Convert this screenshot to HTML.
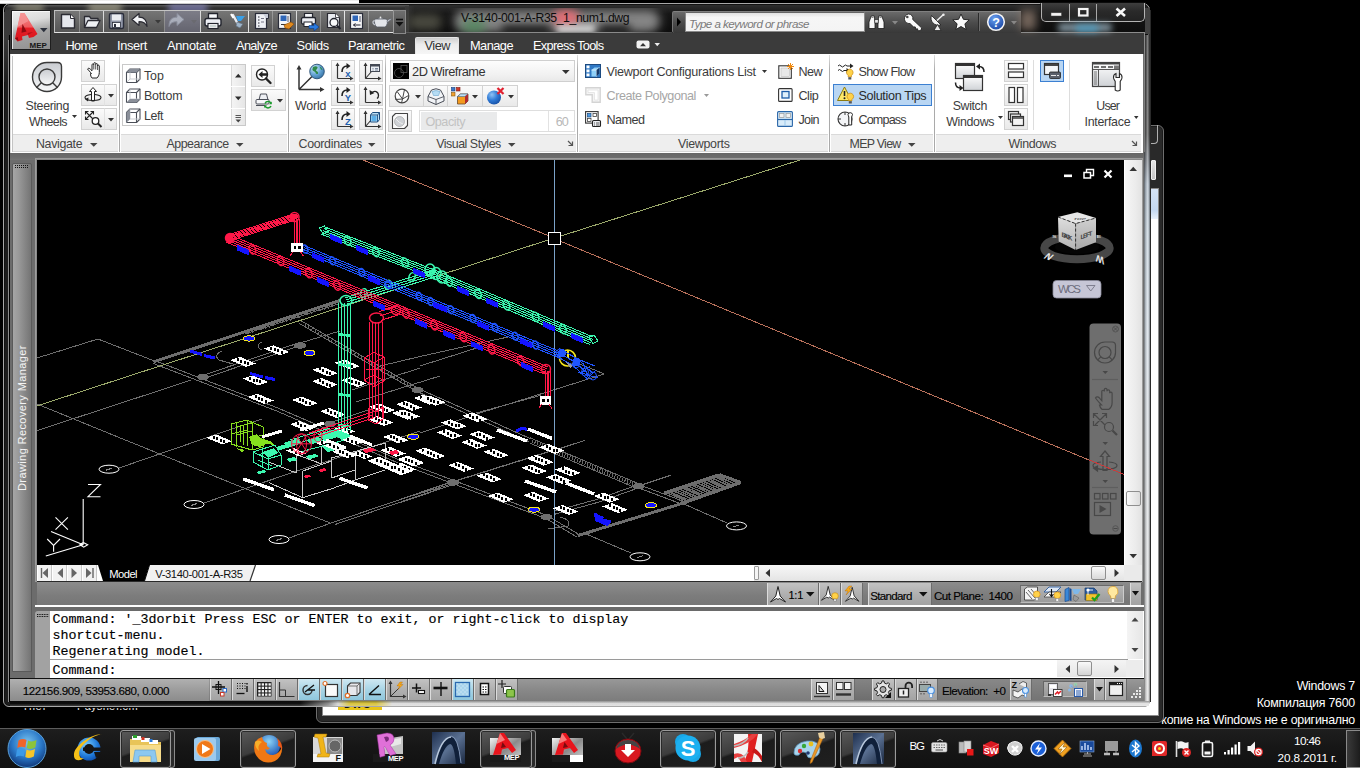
<!DOCTYPE html>
<html lang="en">
<head>
<meta charset="utf-8">
<title>AutoCAD MEP - V-3140-001-A-R35_1_num1.dwg</title>
<style>
*{box-sizing:border-box;margin:0;padding:0}
html,body{width:1360px;height:768px;overflow:hidden;background:#000}
body{position:relative;font-family:"Liberation Sans",sans-serif;font-size:12px;color:#222}
.a{position:absolute}
svg{position:absolute;overflow:visible}
.rt{position:absolute;font-size:12.6px;color:#3a3a3a;white-space:nowrap;line-height:14px;letter-spacing:-0.35px}
.pt{position:absolute;font-size:12.6px;color:#444;white-space:nowrap;line-height:14px;letter-spacing:-0.35px;text-align:center}
.tab{position:absolute;top:38px;font-size:12.6px;color:#fff;white-space:nowrap;line-height:14px;letter-spacing:-0.35px}
.btn{position:absolute;border:1px solid #d4d4d4;background:linear-gradient(#fafafa,#ececec)}
.sb{position:absolute;font-size:11.5px;color:#111;white-space:nowrap;line-height:14px;letter-spacing:-0.3px}
.cmd{position:absolute;font-family:"Liberation Mono",monospace;font-size:13.33px;color:#000;white-space:pre;line-height:16px;-webkit-text-stroke:0.15px #000}
</style>
</head>
<body>
<!-- watermark -->
<div class="a" style="right:5px;top:678px;text-align:right;color:#fff;font-size:12.4px;line-height:17px;letter-spacing:-0.25px;white-space:nowrap">Windows 7<br>Компилация 7600<br>копие на Windows не е оригинално</div>

<!-- window behind (partially visible right + bottom) -->
<div class="a" style="left:316px;top:125px;width:848px;height:598px;border-radius:6px;background:#292929;border:1px solid #6e6e6e;box-shadow:inset 0 0 0 1px #1a1a1a"></div>
<div class="a" style="left:1140px;top:125px;width:18px;height:19px;border:1px solid #b0b0b0;border-top:none;border-radius:0 0 4px 4px"></div>
<div class="a" style="left:1151px;top:160px;width:5px;height:20px;background:linear-gradient(#e6e6e6,#c4c4c4);border:1px solid #f0f0f0;border-radius:1px"></div>
<div class="a" style="left:322px;top:188px;width:837px;height:528px;background:#fff;border:1px solid #8a8a8a"></div>
<div class="a" style="left:1151px;top:189px;width:7px;height:30px;background:linear-gradient(#d4e2f4,#c4d8f0 70%,#e8f0fa)"></div>
<div class="a" style="left:338px;top:700px;width:44px;height:9px;background:#e8c416"></div>
<div class="a" style="left:340px;top:700px;font-size:11px;font-weight:bold;line-height:8px;height:6px;overflow:hidden;color:#111">DWG</div>

<!-- main window glass frame -->
<div id="win" class="a" style="left:3px;top:3px;width:1147px;height:704px;border-radius:7px 7px 6px 6px;background:#1c1c1c;border:1px solid #a8a8a8;box-shadow:inset 0 0 0 1px #111"></div>
<!-- glass: right edge shows light window behind -->
<div class="a" style="left:1144px;top:34px;width:6px;height:668px;background:linear-gradient(#454545 0,#5c5c5c 100px,#8a9098 128px,#b4c0cc 150px,#c8d4de 200px,#d6dee6 300px,#dcdfe2 450px,#e0e0e0 668px)"></div>
<div class="a" style="left:1144px;top:34px;width:6px;height:668px;background:linear-gradient(90deg,rgba(0,0,0,.5),rgba(0,0,0,.1) 30%,rgba(255,255,255,.3) 60%,rgba(0,0,0,.1) 85%,rgba(0,0,0,.55))"></div>
<div class="a" style="left:1150px;top:10px;width:1px;height:692px;background:#2a2a2a"></div>
<!-- glass: bottom edge -->
<div class="a" style="left:10px;top:701px;width:1139px;height:5px;background:linear-gradient(90deg,#0c0c0c 0,#111 290px,#8a8a8a 318px,#d4d4d4 328px,#d8c340 340px,#d8c340 366px,#ddd 382px,#dadada 800px,#e2e2e2 1139px)"></div>
<div class="a" style="left:10px;top:701px;width:1139px;height:5px;background:linear-gradient(rgba(0,0,0,.35),rgba(0,0,0,0) 50%,rgba(255,255,255,.2))"></div>
<div class="a" style="left:4px;top:12px;width:5px;height:70px;background:linear-gradient(#3a3a3a,#383838 40%,#1c1c1c)"></div>
<!-- left glass inner lines -->
<div class="a" style="left:8px;top:40px;width:1px;height:662px;background:#8c8c8c"></div>
<div class="a" style="left:9px;top:34px;width:1px;height:668px;background:#000"></div>
<!-- title bar -->
<div class="a" style="left:5px;top:5px;width:1143px;height:30px;border-radius:5px 5px 0 0;background:linear-gradient(#2e2e2e,#161616 30%,#0c0c0c)"></div>
<div class="a" style="left:5px;top:5px;width:404px;height:30px;border-radius:5px 0 0 0;background:linear-gradient(#585858 0,#2e2e2e 3px,#383838 6px,#3a3a3a)"></div>
<div class="a" style="left:14px;top:5px;width:30px;height:6px;border-radius:3px;background:#b8b49a;filter:blur(3px);opacity:.75"></div>
<div class="a" style="left:88px;top:5px;width:34px;height:6px;border-radius:3px;background:#c8c4a8;filter:blur(3px);opacity:.8"></div>
<div class="a" style="left:168px;top:5px;width:40px;height:6px;border-radius:3px;background:#9a9ae0;filter:blur(3px);opacity:.8"></div>
<div class="a" style="left:405px;top:6px;width:10px;height:28px;background:linear-gradient(90deg,#3a3a3a,rgba(20,20,20,0))"></div>
<!-- client -->
<div class="a" style="left:10px;top:34px;width:1134px;height:667px;background:#6e6e6e"></div>
<!-- desktop icon label peeking below window -->
<div class="a" style="left:22px;top:708px;width:130px;height:4px;overflow:hidden"><div style="position:absolute;left:0;top:-8px;color:#e8e8e8;font-size:11px;line-height:12px;letter-spacing:.3px;white-space:nowrap">Тнет&nbsp;&nbsp;&nbsp;&nbsp;&nbsp;&nbsp;&nbsp;&nbsp;&nbsp;Рaуsnет.сm</div></div>
<div class="a" style="left:338px;top:707px;width:44px;height:3px;background:#e8c416;overflow:hidden"><div style="position:absolute;left:6px;top:-7px;font-size:10px;font-weight:bold;line-height:10px;color:#111;letter-spacing:1px">DWG</div></div>
<!-- ===== ribbon tabs ===== -->
<div class="a" style="left:10px;top:33px;width:1134px;height:21px;background:#3b3b3b"></div>
<div class="a" style="left:415px;top:37px;width:44px;height:17px;background:linear-gradient(#cfcfcf,#ececec 40%,#f6f6f6);border:1px solid #e6e6e6;border-bottom:none;border-radius:2px 2px 0 0"></div>
<div class="a" style="left:65.5px;top:37px;font-size:12.8px;line-height:17px;color:#fff;letter-spacing:-0.66px;white-space:pre;">Home</div>
<div class="a" style="left:117.0px;top:37px;font-size:12.8px;line-height:17px;color:#fff;letter-spacing:-0.34px;white-space:pre;">Insert</div>
<div class="a" style="left:167.0px;top:37px;font-size:12.8px;line-height:17px;color:#fff;letter-spacing:-0.28px;white-space:pre;">Annotate</div>
<div class="a" style="left:236.0px;top:37px;font-size:12.8px;line-height:17px;color:#fff;letter-spacing:-0.65px;white-space:pre;">Analyze</div>
<div class="a" style="left:296.6px;top:37px;font-size:12.8px;line-height:17px;color:#fff;letter-spacing:-0.48px;white-space:pre;">Solids</div>
<div class="a" style="left:348.0px;top:37px;font-size:12.8px;line-height:17px;color:#fff;letter-spacing:-0.54px;white-space:pre;">Parametric</div>
<div class="a" style="left:470.0px;top:37px;font-size:12.8px;line-height:17px;color:#fff;letter-spacing:-0.54px;white-space:pre;">Manage</div>
<div class="a" style="left:533.0px;top:37px;font-size:12.8px;line-height:17px;color:#fff;letter-spacing:-0.69px;white-space:pre;">Express Tools</div>
<div class="a" style="left:424.5px;top:37px;font-size:12.8px;line-height:17px;color:#333;letter-spacing:-0.50px;white-space:pre;">View</div>
<svg style="left:634px;top:38px;" width="30" height="14" viewBox="0 0 30 14"><rect x="2.500" y="2.500" width="13" height="8" rx="2" fill="#f2f2f2"/><path d="M6 8.200h6l-3-3.200z" fill="#333"/><path d="M20.500 5h5.500l-2.750 3.200z" fill="#eee"/></svg>
<!-- ===== title bar ===== -->
<div class="a" style="left:440px;top:8px;width:232px;height:25px;overflow:hidden"><div class="a" style="left:14px;top:2px;width:206px;height:22px;border-radius:11px;background:#858585;filter:blur(5px)"></div><div class="a" style="left:22px;top:11px;width:24px;height:14px;border-radius:7px;background:#4f8a5c;filter:blur(5px);opacity:.8"></div><div class="a" style="left:113px;top:2px;width:26px;height:16px;border-radius:8px;background:#e06c74;filter:blur(4px)"></div><div class="a" style="left:116px;top:17px;width:40px;height:8px;border-radius:4px;background:#d8d8d8;filter:blur(3px)"></div><div class="a" style="left:62px;top:17px;width:48px;height:10px;background:#1a1a1a;filter:blur(4px)"></div><div class="a" style="left:160px;top:17px;width:30px;height:10px;background:#1a1a1a;filter:blur(4px)"></div></div>
<div class="a" style="left:408px;top:14px;width:34px;height:16px;border-radius:8px;background:#4a4a40;filter:blur(5px)"></div>
<div class="a" style="left:461.0px;top:10px;font-size:12.2px;line-height:16px;color:#0c0c0c;letter-spacing:-0.37px;white-space:pre;">V-3140-001-A-R35_1_num1.dwg</div>
<div class="a" style="left:405px;top:32px;width:267px;height:1px;background:linear-gradient(90deg,#555,#8a8a8a 30%,#8a8a8a 80%,#444)"></div>
<div class="a" style="left:11px;top:10px;width:40px;height:40px;border:1px solid #1e1e1e;background:linear-gradient(168deg,#ededed 0,#dcdcdc 30%,#a4a4a4 55%,#8f8f8f 100%);box-shadow:inset 1px 1px 0 rgba(255,255,255,.7)"></div>
<svg style="left:11px;top:10px;" width="40" height="40" viewBox="0 0 40 40"><defs><linearGradient id="ag" x1="0" y1="0" x2="0" y2="1"><stop offset="0" stop-color="#f58a8a"/><stop offset=".5" stop-color="#ee5a5e"/><stop offset=".52" stop-color="#e51f26"/><stop offset="1" stop-color="#d8141c"/></linearGradient></defs>
<path d="M4 28.500l5.500-25.500h4l13 21-4 3-4.500 1-1-3-6 1.500.5 3.500-5 1.500z" fill="url(#ag)"/>
<path d="M9.500 3l-3 14 11-6-4-8z" fill="#f79a9a" opacity=".7"/>
<path d="M11.500 14l4 7.500-5 1.200z" fill="#8c0a10"/>
<path d="M4 28.500l2.500-1.500 1 4z" fill="#8c0a10"/><path d="M17 25l-.5-2 5.500-1z" fill="#b01018"/>
<path d="M29 18h7.500l-3.700 4.300z" fill="#2a2f3b"/></svg>
<div class="a" style="left:29.5px;top:41px;font-size:8px;line-height:10px;color:#161616;letter-spacing:-0.01px;white-space:pre;font-weight:bold;">MEP</div>
<div class="a" style="left:54px;top:10px;width:340px;height:23px;background:linear-gradient(#767676,#666 50%,#565656);border-top:1px solid #c4c4c4;border-bottom:1px solid #e2e2e2;border-left:1px solid #bdbdbd"></div>
<div class="a" style="left:393px;top:10px;width:13px;height:24px;background:linear-gradient(#6e6e6e,#4a4a4a);border:1px solid #8a8a8a;border-left:1px solid #999"></div>
<svg style="left:393px;top:10px;" width="13" height="24" viewBox="0 0 13 24"><path d="M3 9.500h7" stroke="#111" stroke-width="1.600"/><path d="M2.500 12h8l-4 4.500z" fill="#111"/></svg>
<div class="a" style="left:79px;top:11px;width:1px;height:21px;background:rgba(255,255,255,.28)"></div>
<div class="a" style="left:128px;top:11px;width:1px;height:21px;background:rgba(255,255,255,.28)"></div>
<div class="a" style="left:164px;top:11px;width:1px;height:21px;background:rgba(255,255,255,.28)"></div>
<div class="a" style="left:248px;top:11px;width:1px;height:21px;background:rgba(255,255,255,.28)"></div>
<div class="a" style="left:272px;top:11px;width:1px;height:21px;background:rgba(255,255,255,.28)"></div>
<div class="a" style="left:320px;top:11px;width:1px;height:21px;background:rgba(255,255,255,.28)"></div>
<div class="a" style="left:344px;top:11px;width:1px;height:21px;background:rgba(255,255,255,.28)"></div>
<div class="a" style="left:368px;top:11px;width:1px;height:21px;background:rgba(255,255,255,.28)"></div>
<div class="a" style="left:103px;top:11px;width:1px;height:21px;background:rgba(255,255,255,.75)"></div>
<div class="a" style="left:200px;top:11px;width:1px;height:21px;background:rgba(255,255,255,.75)"></div>
<div class="a" style="left:248px;top:11px;width:1px;height:21px;background:rgba(255,255,255,.75)"></div>
<div class="a" style="left:296px;top:11px;width:1px;height:21px;background:rgba(255,255,255,.75)"></div>
<div class="a" style="left:344px;top:11px;width:1px;height:21px;background:rgba(255,255,255,.75)"></div>
<div class="a" style="left:165px;top:11px;width:35px;height:21px;background:rgba(150,150,200,.22)"></div>
<svg style="left:55px;top:10px;" width="24" height="22" viewBox="0 0 24 22"><path d="M6.5 4.5h9l4 4v9.5h-13z" fill="#e6e8ee" stroke="#2b2b33" stroke-width="1.4" stroke-linejoin="round"/><path d="M15.5 4.5v4h4" fill="#fff" stroke="#2b2b33" stroke-width="1"/></svg>
<svg style="left:79px;top:10px;" width="24" height="22" viewBox="0 0 24 22"><path d="M5.5 17.5v-11h5l1.5 2h7v2" fill="#d8dbe2" stroke="#2b2b33" stroke-width="1.3" stroke-linejoin="round"/><path d="M5.5 17.5l3.5-7h12l-3.5 7z" fill="#eef0f4" stroke="#2b2b33" stroke-width="1.3" stroke-linejoin="round"/></svg>
<svg style="left:104px;top:10px;" width="24" height="22" viewBox="0 0 24 22"><rect x="5.5" y="3.5" width="14" height="15" rx="1.5" fill="#8f95a6" stroke="#2a2d3a" stroke-width="1.4"/><rect x="8" y="4.5" width="9" height="6" fill="#e9ebf0"/><rect x="8.5" y="12.5" width="8" height="5" fill="#f4f5f8" stroke="#2a2d3a" stroke-width=".8"/><rect x="10" y="14" width="2" height="3" fill="#2a2d3a"/></svg>
<svg style="left:128px;top:10px;" width="24" height="22" viewBox="0 0 24 22"><path d="M4 9.5l7-6v3.7c5 0 8 2.300 8 9.300c-1.500-3.500-3.500-4.800-8-4.800v3.800z" fill="#f2f3f6" stroke="#2b2b33" stroke-width="1.200" stroke-linejoin="round"/></svg>
<svg style="left:152px;top:10px;" width="12" height="22" viewBox="0 0 12 22"><path d="M3 10h6l-3 3.500z" fill="#3a3a3a"/></svg>
<svg style="left:164px;top:10px;" width="24" height="22" viewBox="0 0 24 22"><path d="M20 9.500l-7-6v3.700c-5 0-8 2.300-8 9.300c1.500-3.500 3.500-4.800 8-4.800v3.800z" fill="#a9adba" stroke="#8a8e9c" stroke-width="1" stroke-linejoin="round"/></svg>
<svg style="left:188px;top:10px;" width="12" height="22" viewBox="0 0 12 22"><path d="M3 10h6l-3 3.500z" fill="#6a6a70"/></svg>
<svg style="left:201px;top:10px;" width="24" height="22" viewBox="0 0 24 22"><path d="M7.500 9v-5.500h9v5.500" fill="#f6f7fa" stroke="#23252e" stroke-width="1.300"/><rect x="4" y="8.500" width="16" height="7.500" rx="2" fill="#eceef3" stroke="#23252e" stroke-width="1.400"/><rect x="7" y="13.500" width="10" height="5" fill="#fff" stroke="#23252e" stroke-width="1.200"/><path d="M8.500 16h7" stroke="#9aa" stroke-width="1"/></svg>
<svg style="left:225px;top:10px;" width="24" height="22" viewBox="0 0 24 22"><path d="M8 5l6 11" stroke="#e8eaf0" stroke-width="2.400" stroke-linecap="round"/><path d="M6 4l2.500 4" stroke="#fff" stroke-width="2"/><path d="M11 6h9l-4 5h-3z" fill="#3aa0e8"/><path d="M12 12l6 2-3 4-4-2z" fill="#9fb4c8" stroke="#5a6a7a" stroke-width=".6"/></svg>
<svg style="left:249px;top:10px;" width="24" height="22" viewBox="0 0 24 22"><rect x="6.500" y="3.500" width="11" height="15" fill="#eef0f5" stroke="#2a2d3a" stroke-width="1.200"/><path d="M14 3.500h5.500v5h-2.500" fill="#c8ccd8" stroke="#2a2d3a" stroke-width="1"/><path d="M9 7h1.500M9 10h1.500M9 13h1.500M9 16h1.500" stroke="#2a2d3a" stroke-width="1.200"/><path d="M12 8.500h3M12 12h3" stroke="#778" stroke-width="1"/></svg>
<svg style="left:273px;top:10px;" width="24" height="22" viewBox="0 0 24 22"><rect x="5.500" y="3.500" width="12" height="15" fill="#f4f5f8" stroke="#2a2d3a" stroke-width="1.200"/><rect x="7.500" y="5.500" width="6" height="5.500" fill="#2f66b8"/><path d="M15 6v6" stroke="#889" stroke-width="1.500"/><path d="M8 14.500h5" stroke="#333" stroke-width="1"/><path d="M11 15l7-3 3 2-5 5-4-1z" fill="#e08a1e" stroke="#8a4a08" stroke-width=".6"/></svg>
<svg style="left:297px;top:10px;" width="24" height="22" viewBox="0 0 24 22"><path d="M7.500 8v-4.500h8v4.500" fill="#f6f7fa" stroke="#23252e" stroke-width="1.200"/><rect x="4.500" y="7.500" width="14" height="6.500" rx="1.500" fill="#eceef3" stroke="#23252e" stroke-width="1.300"/><rect x="7" y="12" width="8" height="4.500" fill="#fff" stroke="#23252e" stroke-width="1"/><path d="M12 15.500h5v-2.500l5 4-5 4v-2.500h-5z" fill="#2a7ae0" stroke="#0c3c88" stroke-width=".6"/></svg>
<svg style="left:321px;top:10px;" width="24" height="22" viewBox="0 0 24 22"><path d="M6.500 3.500h8l4 4v10h-12z" fill="#e9ebf0" stroke="#2b2b33" stroke-width="1.200"/><path d="M14.500 3.500v4h4" fill="#fff" stroke="#2b2b33" stroke-width=".8"/><circle cx="13" cy="12.500" r="4" fill="#f8f9fb" stroke="#23252e" stroke-width="1.300"/><path d="M16 15.500l3.500 3.500" stroke="#23252e" stroke-width="2"/></svg>
<svg style="left:345px;top:10px;" width="24" height="22" viewBox="0 0 24 22"><rect x="5.500" y="3.500" width="12" height="15" fill="#f4f5f8" stroke="#2a2d3a" stroke-width="1.200"/><rect x="7.500" y="5.500" width="5.500" height="5.500" fill="#2f66b8"/><path d="M15 6v6" stroke="#889" stroke-width="1.500"/><path d="M8.500 15h7M8.500 15l2-1.500M8.500 15l2 1.500" stroke="#223" stroke-width="1" fill="none"/></svg>
<svg style="left:369px;top:10px;" width="24" height="22" viewBox="0 0 24 22"><path d="M7 9h9c2 0 2.500 1 2.500 3s-1.500 5-3 5h-7c-1.500 0-3-2.500-3-5s.5-3 1.500-3z" fill="#e3e5ea" stroke="#555a66" stroke-width=".8"/><path d="M18 11c2-2 3.500-2.500 4.500-2l-.5 1c-1 0-2 .8-3.500 3z" fill="#d0d3da" stroke="#555a66" stroke-width=".6"/><path d="M6 11c-2.500-1-3 3 0 4" fill="none" stroke="#c8ccd4" stroke-width="1.200"/><path d="M9 9c0-1 5-1 5 0" fill="#f4f5f7" stroke="#555a66" stroke-width=".6"/><circle cx="11.500" cy="7.300" r=".9" fill="#eee"/></svg>
<div class="a" style="left:672px;top:11px;width:349px;height:22px;background:linear-gradient(#6a6a6a,#4c4c4c 50%,#383838);border-top:1px solid #808080;border-left:1px solid #777;border-radius:2px 0 0 2px"></div>
<svg style="left:672px;top:12px;" width="13" height="20" viewBox="0 0 13 20"><path d="M5 5.500l4 4.500-4 4.500z" fill="#000"/></svg>
<div class="a" style="left:685px;top:12px;width:180px;height:20px;background:linear-gradient(#e2e2e2,#f6f6f6 25%,#f4f4f4);border:1px solid #8a8a8a;border-top-color:#666"></div>
<div class="a" style="left:689.0px;top:16px;font-size:11.6px;line-height:15px;color:#7a7a7a;letter-spacing:-0.55px;white-space:pre;font-style:italic;">Type a keyword or phrase</div>
<svg style="left:867px;top:13px;" width="20" height="18" viewBox="0 0 20 18"><path d="M2 15.500v-6.500l2.300-6h3l.7 6v6.500zM11 15.500v-6.500l.7-6h3l2.300 6v6.500z" fill="#fafafa" stroke="#1a1a1a" stroke-width=".8"/><rect x="7.800" y="6.500" width="3.400" height="3.500" fill="#e8e8e8" stroke="#1a1a1a" stroke-width=".6"/><path d="M4.500 4.500h2M12.500 4.500h2" stroke="#888" stroke-width="1"/></svg>
<svg style="left:891px;top:13px;" width="8" height="18" viewBox="0 0 8 18"><path d="M1 8h6l-3 3.500z" fill="#888"/></svg>
<svg style="left:903px;top:12px;" width="22" height="20" viewBox="0 0 22 20"><path d="M5.500 2a4.300 4.300 0 0 1 4.200 5.500l9 8.500-1 2.500-2.800.3-.3-2-2 .2-.2-2-2-.2-3.400-3.300a4.300 4.300 0 1 1-1.500-9.500z" fill="#fafafa" stroke="#1a1a1a" stroke-width=".8" stroke-linejoin="round"/><circle cx="4.300" cy="5" r="1.300" fill="#444"/></svg>
<svg style="left:928px;top:12px;" width="22" height="20" viewBox="0 0 22 20"><path d="M3.500 3.500c-2 5.500 2.500 11 9.500 9.500z" fill="#f4f4f4" stroke="#1a1a1a" stroke-width=".8"/><path d="M9 8.500l6.500-6" stroke="#f4f4f4" stroke-width="1.400"/><circle cx="15.500" cy="2.800" r="1.200" fill="#eee"/><path d="M6 18.500l3.500-6 3.500 6z" fill="#ececec" stroke="#1a1a1a" stroke-width=".7"/></svg>
<svg style="left:951px;top:12px;" width="20" height="20" viewBox="0 0 20 20"><path d="M10 2l2.400 5.300 5.800.6-4.300 3.900 1.200 5.700-5.100-3-5.100 3 1.200-5.700-4.300-3.900 5.800-.6z" fill="#fafafa" stroke="#1a1a1a" stroke-width=".9" stroke-linejoin="round"/></svg>
<div class="a" style="left:978px;top:13px;width:1px;height:18px;background:#2a2a2a"></div>
<div class="a" style="left:979px;top:13px;width:1px;height:18px;background:#6c6c6c"></div>
<svg style="left:986px;top:12px;" width="20" height="20" viewBox="0 0 20 20"><defs><radialGradient id="hg" cx=".4" cy=".3" r=".8"><stop offset="0" stop-color="#6aa0f0"/><stop offset="1" stop-color="#103c9c"/></radialGradient></defs><circle cx="10" cy="10" r="8.300" fill="url(#hg)" stroke="#f4f4f4" stroke-width="1.600"/><text x="10" y="14.500" font-size="12.500" font-weight="bold" fill="#fff" text-anchor="middle" font-family="Liberation Sans,sans-serif">?</text></svg>
<svg style="left:1010px;top:13px;" width="8" height="18" viewBox="0 0 8 18"><path d="M1 8h6l-3 3.500z" fill="#888"/></svg>
<div class="a" style="left:1041px;top:3px;width:104px;height:19px;border:1px solid #b4b4b4;border-top:none;border-radius:0 0 5px 5px;background:linear-gradient(#3e3e3e,#2a2a2a 45%,#222);box-shadow:0 0 0 1px rgba(20,20,20,.6)"></div>
<div class="a" style="left:1069px;top:4px;width:1px;height:17px;background:#a8a8a8"></div>
<div class="a" style="left:1096px;top:4px;width:1px;height:17px;background:#a8a8a8"></div>
<svg style="left:1041px;top:3px;" width="104" height="19" viewBox="0 0 104 19"><rect x="10" y="9.800" width="10.500" height="3.200" fill="#f4f4f4" stroke="#444" stroke-width=".5"/><rect x="38" y="6" width="8.500" height="6.500" fill="none" stroke="#f4f4f4" stroke-width="2.200"/><path d="M75.500 5.500l8.500 7.500M84 5.500l-8.500 7.500" stroke="#f8f8f8" stroke-width="2.600"/></svg>
<div class="a" style="left:1058px;top:23px;width:54px;height:9px;background:#8ea4b0;filter:blur(3px);opacity:.85;border-radius:4px"></div>
<div class="a" style="left:1076px;top:25px;width:22px;height:7px;background:#4c9cc0;filter:blur(3px);opacity:.9"></div>
<div class="a" style="left:1020px;top:10px;width:16px;height:20px;background:#8a786c;filter:blur(4px);opacity:.8"></div>
<div class="a" style="left:1021px;top:32px;width:123px;height:1px;background:#8c8c8c"></div>
<div class="a" style="left:1144px;top:32px;width:1px;height:120px;background:linear-gradient(#8c8c8c,#777)"></div>
<div class="a" style="left:1145px;top:8px;width:5px;height:26px;background:#424242"></div>
<!-- ===== ribbon ===== -->
<div class="a" style="left:10px;top:54px;width:1133px;height:99px;background:#fff;border-left:1px solid #ddd"></div>
<div class="a" style="left:13px;top:134px;width:105px;height:18px;background:#eeeeee;border-top:1px solid #dadada;border-bottom:1px solid #d6d6d6"></div>
<div class="a" style="left:121px;top:134px;width:166px;height:18px;background:#eeeeee;border-top:1px solid #dadada;border-bottom:1px solid #d6d6d6"></div>
<div class="a" style="left:290px;top:134px;width:94px;height:18px;background:#eeeeee;border-top:1px solid #dadada;border-bottom:1px solid #d6d6d6"></div>
<div class="a" style="left:387px;top:134px;width:189px;height:18px;background:#eeeeee;border-top:1px solid #dadada;border-bottom:1px solid #d6d6d6"></div>
<div class="a" style="left:579px;top:134px;width:249px;height:18px;background:#eeeeee;border-top:1px solid #dadada;border-bottom:1px solid #d6d6d6"></div>
<div class="a" style="left:831px;top:134px;width:102px;height:18px;background:#eeeeee;border-top:1px solid #dadada;border-bottom:1px solid #d6d6d6"></div>
<div class="a" style="left:936px;top:134px;width:205px;height:18px;background:#eeeeee;border-top:1px solid #dadada;border-bottom:1px solid #d6d6d6"></div>
<div class="a" style="left:119px;top:55px;width:1px;height:97px;background:linear-gradient(#e0e0e0,#adadad 15%,#a9a9a9)"></div>
<div class="a" style="left:288px;top:55px;width:1px;height:97px;background:linear-gradient(#e0e0e0,#adadad 15%,#a9a9a9)"></div>
<div class="a" style="left:385px;top:55px;width:1px;height:97px;background:linear-gradient(#e0e0e0,#adadad 15%,#a9a9a9)"></div>
<div class="a" style="left:577px;top:55px;width:1px;height:97px;background:linear-gradient(#e0e0e0,#adadad 15%,#a9a9a9)"></div>
<div class="a" style="left:829px;top:55px;width:1px;height:97px;background:linear-gradient(#e0e0e0,#adadad 15%,#a9a9a9)"></div>
<div class="a" style="left:934px;top:55px;width:1px;height:97px;background:linear-gradient(#e0e0e0,#adadad 15%,#a9a9a9)"></div>
<div class="a" style="left:12px;top:56px;width:1px;height:96px;background:#c4c4c4"></div>
<svg style="left:31px;top:61px;" width="32" height="32" viewBox="0 0 32 32"><defs><linearGradient id="swg" x1="0" y1="0" x2="0" y2="1"><stop offset="0" stop-color="#c9ccd1"/><stop offset="1" stop-color="#f7f8f9"/></linearGradient></defs>
<path d="M16 1.500h10.500q4 0 4 4v10.500a14.500 14.500 0 1 1-14.500-14.500z" fill="url(#swg)" stroke="#3a3a3a" stroke-width="1.400"/>
<circle cx="16" cy="16" r="8" fill="url(#swg)" stroke="#3a3a3a" stroke-width="1.400"/>
<path d="M10.300 21.700l-5 5M21.700 21.700l5 5" stroke="#3a3a3a" stroke-width="1.400"/></svg>
<div class="a" style="left:25.6px;top:98px;font-size:12.4px;line-height:16px;color:#3c3c3c;letter-spacing:-0.35px;white-space:pre;">Steering</div>
<div class="a" style="left:29.0px;top:114px;font-size:12.4px;line-height:16px;color:#3c3c3c;letter-spacing:-0.56px;white-space:pre;">Wheels</div>
<svg style="left:72.3px;top:114.5px;" width="5" height="3" viewBox="0 0 5 3"><path d="M0 0h5l-2.5 3z" fill="#333"/></svg>
<div class="a" style="left:81px;top:60px;width:24px;height:22px;border:1px solid #d2d2d2;background:linear-gradient(#fbfbfb,#f0f0f0 60%,#e9e9e9);"></div>
<svg style="left:83px;top:61px;" width="20" height="20" viewBox="0 0 20 20"><path d="M8.500 12.500c-1.500-1.500-3-3.500-4-4.500.8-1.200 2-.8 3.200.500l1.300 1.300v-6c0-1.200 1.800-1.200 1.800 0v-1.300c0-1.200 1.900-1.200 1.900 0v1c0-1.200 1.900-1.200 1.900 0v1.500c0-1.100 1.700-1.100 1.700 0v6.500c0 2.500-1.300 4.500-2.300 5.500h-5c-1-1-1.500-2.500-1.500-4.500z" fill="#fff" stroke="#222" stroke-width="1" stroke-linejoin="round"/><path d="M10.800 4v4.500M12.700 3.500v5M14.600 5v4" stroke="#222" stroke-width=".8"/></svg>
<div class="a" style="left:81px;top:84px;width:24px;height:22px;border:1px solid #d2d2d2;background:linear-gradient(#fbfbfb,#f0f0f0 60%,#e9e9e9);"></div>
<div class="a" style="left:104px;top:84px;width:13px;height:22px;border:1px solid #d2d2d2;background:linear-gradient(#fbfbfb,#f0f0f0 60%,#e9e9e9);border-left-color:#e2e2e2"></div>
<svg style="left:83px;top:85px;" width="20" height="20" viewBox="0 0 20 20"><path d="M10 2.500l3.500 4h-2v9.500h-3v-9.500h-2z" fill="#fff" stroke="#222" stroke-width="1" stroke-linejoin="round"/><path d="M8 9.500c-4 .5-6 1.800-6 3 0 1.700 3.500 3 8 3s8-1.300 8-3c0-1.200-2-2.500-6-3" fill="none" stroke="#222" stroke-width="1.100"/><path d="M5.500 12.500l-3.500 1.500 3 2.500z" fill="#222"/></svg>
<svg style="left:107.5px;top:93.5px;" width="6" height="3.5" viewBox="0 0 6 3.5"><path d="M0 0h6l-3.0 3.5z" fill="#333"/></svg>
<div class="a" style="left:81px;top:108px;width:24px;height:22px;border:1px solid #d2d2d2;background:linear-gradient(#fbfbfb,#f0f0f0 60%,#e9e9e9);"></div>
<div class="a" style="left:104px;top:108px;width:13px;height:22px;border:1px solid #d2d2d2;background:linear-gradient(#fbfbfb,#f0f0f0 60%,#e9e9e9);border-left-color:#e2e2e2"></div>
<svg style="left:83px;top:109px;" width="20" height="20" viewBox="0 0 20 20"><path d="M3 3l7 7M10 3l-7 7" stroke="#222" stroke-width="1.100"/><path d="M2.500 5.500v-3h3M10.500 5.500v-3h-3M2.500 7.500v3h3" fill="none" stroke="#222" stroke-width="1.100"/><circle cx="12.500" cy="12" r="3.300" fill="#fff" stroke="#222" stroke-width="1.300"/><path d="M15 14.500l3.500 3.500" stroke="#222" stroke-width="2"/></svg>
<svg style="left:107.5px;top:117.5px;" width="6" height="3.5" viewBox="0 0 6 3.5"><path d="M0 0h6l-3.0 3.5z" fill="#333"/></svg>
<div class="a" style="left:36.0px;top:136px;font-size:12.4px;line-height:16px;color:#444;letter-spacing:-0.34px;white-space:pre;">Navigate</div>
<svg style="left:90px;top:142.8px;" width="7.5" height="3.8" viewBox="0 0 7.5 3.8"><path d="M0 0h7.5l-3.75 3.8z" fill="#444"/></svg>
<div class="a" style="left:122px;top:64px;width:124px;height:62px;border:1px solid #c9c9c9;background:#fff"></div>
<div class="a" style="left:231px;top:65px;width:14px;height:60px;background:linear-gradient(90deg,#f4f4f4,#e6e6e6);border-left:1px solid #d8d8d8"></div>
<div class="a" style="left:231px;top:86px;width:14px;height:1px;background:#fff"></div>
<div class="a" style="left:231px;top:108px;width:14px;height:1px;background:#fff"></div>
<svg style="left:231px;top:65px;" width="14" height="60" viewBox="0 0 14 60"><path d="M4 12.500h6.500l-3.250-3.800zM4 31.500h6.500l-3.250 3.800z" fill="#2c2c2c"/><path d="M4.500 50.500h5.500M4.500 52.500h5.500" stroke="#555" stroke-width="1"/><path d="M4.500 54.500h5.500l-2.750 3z" fill="#444"/></svg>
<svg style="left:125px;top:67px;" width="16" height="17" viewBox="0 0 16 17"><path d="M1.500 5.500l3.500-3.500h10v10l-3.500 3.500h-10z" fill="#fff" stroke="#4b4f58" stroke-width="1.100" stroke-linejoin="round"/><path d="M1.500 5.500h10v10M11.500 5.500l3.500-3.500" fill="none" stroke="#4b4f58" stroke-width="1.100"/><path d="M5 2v10h10M5 12l-3.500 3.500" fill="none" stroke="#c4c7cd" stroke-width=".9"/><path d="M1.500 5.500l3.500-3.500h10l-3.500 3.500z" fill="#8a8f99"/></svg>
<svg style="left:125px;top:87px;" width="16" height="17" viewBox="0 0 16 17"><path d="M1.500 5.500l3.500-3.500h10v10l-3.500 3.500h-10z" fill="#fff" stroke="#4b4f58" stroke-width="1.100" stroke-linejoin="round"/><path d="M1.500 5.500h10v10M11.500 5.500l3.500-3.500" fill="none" stroke="#4b4f58" stroke-width="1.100"/><path d="M5 2v10h10M5 12l-3.500 3.500" fill="none" stroke="#c4c7cd" stroke-width=".9"/><path d="M1.500 15.500l3.500-3.500h10l-3.500 3.500z" fill="#8a8f99"/></svg>
<svg style="left:125px;top:107px;" width="16" height="17" viewBox="0 0 16 17"><path d="M1.500 5.500l3.500-3.500h10v10l-3.500 3.500h-10z" fill="#fff" stroke="#4b4f58" stroke-width="1.100" stroke-linejoin="round"/><path d="M1.500 5.500h10v10M11.500 5.500l3.500-3.500" fill="none" stroke="#4b4f58" stroke-width="1.100"/><path d="M5 2v10h10M5 12l-3.500 3.500" fill="none" stroke="#c4c7cd" stroke-width=".9"/><path d="M1.500 5.500l3.500-3.500v10l-3.500 3.500z" fill="#8a8f99"/></svg>
<div class="a" style="left:144.0px;top:68px;font-size:12.4px;line-height:16px;color:#3c3c3c;letter-spacing:-0.10px;white-space:pre;">Top</div>
<div class="a" style="left:144.0px;top:88px;font-size:12.4px;line-height:16px;color:#3c3c3c;letter-spacing:-0.16px;white-space:pre;">Bottom</div>
<div class="a" style="left:144.0px;top:108px;font-size:12.4px;line-height:16px;color:#3c3c3c;letter-spacing:-0.42px;white-space:pre;">Left</div>
<div class="a" style="left:251px;top:65px;width:24px;height:22px;border:1px solid #d2d2d2;background:linear-gradient(#fbfbfb,#f0f0f0 60%,#e9e9e9);"></div>
<svg style="left:253px;top:66px;" width="20" height="20" viewBox="0 0 20 20"><circle cx="9" cy="8.500" r="5.500" fill="#fff" stroke="#222" stroke-width="1.400"/><path d="M13 12.500l4.500 4.500" stroke="#222" stroke-width="2.400" stroke-linecap="round"/><path d="M5.500 8.500l4-3.500v2.300h5.500v2.400h-5.500v2.300z" fill="#222"/></svg>
<div class="a" style="left:251px;top:89px;width:35px;height:22px;border:1px solid #d2d2d2;background:linear-gradient(#fbfbfb,#f0f0f0 60%,#e9e9e9);"></div>
<svg style="left:253px;top:90px;" width="20" height="20" viewBox="0 0 20 20"><path d="M6 10l1.500-6h6l1.500 6" fill="#eef0f4" stroke="#4a4e58" stroke-width="1"/><rect x="3" y="9.500" width="13" height="4.500" rx="1" fill="#f6f7f9" stroke="#4a4e58" stroke-width="1"/><path d="M3 15.500h9" stroke="#4a4e58" stroke-width="1"/><path d="M12 13.500a3.300 3.300 0 0 1 6 0M18 16a3.300 3.300 0 0 1-6 0" fill="none" stroke="#1a9a2c" stroke-width="1.500"/><path d="M18.800 11.500v2.800h-2.800zM11.200 18v-2.800h2.800z" fill="#1a9a2c"/></svg>
<svg style="left:277px;top:98.5px;" width="6" height="3.5" viewBox="0 0 6 3.5"><path d="M0 0h6l-3.0 3.5z" fill="#333"/></svg>
<div class="a" style="left:166.4px;top:136px;font-size:12.4px;line-height:16px;color:#444;letter-spacing:-0.46px;white-space:pre;">Appearance</div>
<svg style="left:236px;top:142.8px;" width="7.5" height="3.8" viewBox="0 0 7.5 3.8"><path d="M0 0h7.5l-3.75 3.8z" fill="#444"/></svg>
<svg style="left:294px;top:62px;" width="34" height="32" viewBox="0 0 34 32"><defs><radialGradient id="gl" cx=".35" cy=".3" r=".8"><stop offset="0" stop-color="#d6ecfa"/><stop offset=".5" stop-color="#6aa9d8"/><stop offset="1" stop-color="#2d6a9e"/></radialGradient></defs>
<path d="M5 27.500v-22M5 27.500h23M5 27.500l13-13" stroke="#333" stroke-width="1.500" fill="none"/><path d="M2.500 7.500l2.500-4.500 2.500 4.500zM26 25l4.500 2.500-4.500 2.500z" fill="#333"/>
<circle cx="23" cy="9.500" r="7.300" fill="url(#gl)" stroke="#2a4f73" stroke-width=".9"/><path d="M19 5c2-1 3.500-1 4.500 0 .5 1.500-1 2-1.500 3.500 1 1 2.500 1.500 2 3-.5 1.200-2 .5-2.500-1-.800-1.500-2.500-1-3-2.500-.4-1 .500-2 .500-3zM25.500 4.500c1.500.5 2.500 1.800 3 3.300-1 .2-1.700-.3-2-1.300z" fill="#2f8a4a"/></svg>
<div class="a" style="left:295.0px;top:98px;font-size:12.4px;line-height:16px;color:#3c3c3c;letter-spacing:-0.19px;white-space:pre;">World</div>
<div class="a" style="left:331px;top:60px;width:24px;height:22px;border:1px solid #d2d2d2;background:linear-gradient(#fbfbfb,#f0f0f0 60%,#e9e9e9);"></div>
<svg style="left:333px;top:61px;" width="22" height="20" viewBox="0 0 22 20"><path d="M4.500 17.500v-14M4.500 17.500h14" stroke="#333" stroke-width="1.200" fill="none"/><path d="M2.500 5l2-3.500 2 3.500zM17 15.500l3.500 2-3.500 2z" fill="#333"/><path d="M9 11c0-4 2-6 5.500-6" fill="none" stroke="#222" stroke-width="1.600"/><path d="M13.500 2l4 3-4 3z" fill="#222"/><text x="15" y="15.500" font-size="9.500" font-weight="bold" fill="#1c5fae" text-anchor="middle" font-family="Liberation Sans,sans-serif">x</text></svg>
<div class="a" style="left:331px;top:84px;width:24px;height:22px;border:1px solid #d2d2d2;background:linear-gradient(#fbfbfb,#f0f0f0 60%,#e9e9e9);"></div>
<svg style="left:333px;top:85px;" width="22" height="20" viewBox="0 0 22 20"><path d="M4.500 17.500v-14M4.500 17.500h14" stroke="#333" stroke-width="1.200" fill="none"/><path d="M2.500 5l2-3.500 2 3.500zM17 15.500l3.500 2-3.500 2z" fill="#333"/><path d="M9 11c0-4 2-6 5.500-6" fill="none" stroke="#222" stroke-width="1.600"/><path d="M13.500 2l4 3-4 3z" fill="#222"/><text x="15" y="15.500" font-size="9.500" font-weight="bold" fill="#1c5fae" text-anchor="middle" font-family="Liberation Sans,sans-serif">Y</text></svg>
<div class="a" style="left:331px;top:108px;width:24px;height:22px;border:1px solid #d2d2d2;background:linear-gradient(#fbfbfb,#f0f0f0 60%,#e9e9e9);"></div>
<svg style="left:333px;top:109px;" width="22" height="20" viewBox="0 0 22 20"><path d="M4.500 17.500v-14M4.500 17.500h14" stroke="#333" stroke-width="1.200" fill="none"/><path d="M2.500 5l2-3.500 2 3.500zM17 15.500l3.500 2-3.500 2z" fill="#333"/><path d="M9 11c0-4 2-6 5.500-6" fill="none" stroke="#222" stroke-width="1.600"/><path d="M13.500 2l4 3-4 3z" fill="#222"/><text x="15" y="15.500" font-size="9.500" font-weight="bold" fill="#1c5fae" text-anchor="middle" font-family="Liberation Sans,sans-serif">Z</text></svg>
<div class="a" style="left:359px;top:60px;width:24px;height:22px;border:1px solid #d2d2d2;background:linear-gradient(#fbfbfb,#f0f0f0 60%,#e9e9e9);"></div>
<svg style="left:361px;top:61px;" width="22" height="20" viewBox="0 0 22 20"><path d="M4.500 17.500v-14M4.500 17.500h14" stroke="#333" stroke-width="1.200" fill="none"/><path d="M2.500 5l2-3.500 2 3.500zM17 15.500l3.500 2-3.500 2z" fill="#333"/><path d="M4.500 17.500l6-7" stroke="#333" stroke-width="1.100"/><rect x="9.500" y="3.500" width="9" height="7" fill="#e9edf2" stroke="#444a55" stroke-width="1"/><rect x="9.500" y="3.500" width="9" height="2" fill="#444a55"/><path d="M11.500 7.500h1M14 7.500h3M11.500 9h1M14 9h3" stroke="#5a6a80" stroke-width=".8"/></svg>
<div class="a" style="left:359px;top:84px;width:24px;height:22px;border:1px solid #d2d2d2;background:linear-gradient(#fbfbfb,#f0f0f0 60%,#e9e9e9);"></div>
<svg style="left:361px;top:85px;" width="22" height="20" viewBox="0 0 22 20"><path d="M4.500 17.500v-14M4.500 17.500h14" stroke="#333" stroke-width="1.200" fill="none"/><path d="M2.500 5l2-3.500 2 3.500zM17 15.500l3.500 2-3.500 2z" fill="#333"/><path d="M10.500 8c3-3 7-1.500 7 2.500 0 1.500-.8 2.500-1.500 3" fill="none" stroke="#222" stroke-width="1.300"/><path d="M8.500 5l.5 5 4.500-2z" fill="#222"/></svg>
<div class="a" style="left:359px;top:108px;width:24px;height:22px;border:1px solid #d2d2d2;background:linear-gradient(#fbfbfb,#f0f0f0 60%,#e9e9e9);"></div>
<svg style="left:361px;top:109px;" width="22" height="20" viewBox="0 0 22 20"><path d="M4.500 17.500v-14M4.500 17.500h14" stroke="#333" stroke-width="1.200" fill="none"/><path d="M2.500 5l2-3.500 2 3.500zM17 15.500l3.500 2-3.500 2z" fill="#333"/><path d="M4.500 17.500l6-7" stroke="#333" stroke-width="1.100"/><path d="M9.500 6l2-2.500h7v7l-2 2.500h-7z" fill="#bfe0f5" stroke="#1d4e80" stroke-width="1"/><path d="M9.500 6h7v7M16.500 6l2-2.500" fill="none" stroke="#1d4e80" stroke-width=".9"/><rect x="10.500" y="7" width="5" height="5" fill="#5db0e8"/></svg>
<div class="a" style="left:298.5px;top:136px;font-size:12.4px;line-height:16px;color:#444;letter-spacing:-0.31px;white-space:pre;">Coordinates</div>
<svg style="left:368px;top:142.8px;" width="7.5" height="3.8" viewBox="0 0 7.5 3.8"><path d="M0 0h7.5l-3.75 3.8z" fill="#444"/></svg>
<div class="a" style="left:390px;top:60px;width:185px;height:22px;border:1px solid #cfcfcf;background:linear-gradient(#fdfdfd,#f1f1f1 70%,#e9e9e9)"></div>
<div class="a" style="left:393px;top:63px;width:16px;height:16px;background:#000"></div>
<svg style="left:393px;top:63px;" width="16" height="16" viewBox="0 0 16 16"><circle cx="6" cy="10" r="4.500" fill="none" stroke="#555" stroke-width=".8"/><rect x="8" y="2.500" width="6" height="7" fill="none" stroke="#555" stroke-width=".8"/></svg>
<div class="a" style="left:412.0px;top:63px;font-size:12.8px;line-height:17px;color:#333;letter-spacing:-0.48px;white-space:pre;">2D Wireframe</div>
<svg style="left:562.4px;top:69.5px;" width="7.6" height="4" viewBox="0 0 7.6 4"><path d="M0 0h7.6l-3.8 4z" fill="#333"/></svg>
<div class="a" style="left:389px;top:85px;width:35px;height:22px;border:1px solid #d2d2d2;background:linear-gradient(#fbfbfb,#f0f0f0 60%,#e9e9e9);"></div>
<div class="a" style="left:423px;top:85px;width:25px;height:22px;border:1px solid #d2d2d2;background:linear-gradient(#fbfbfb,#f0f0f0 60%,#e9e9e9);"></div>
<div class="a" style="left:447px;top:85px;width:36px;height:22px;border:1px solid #d2d2d2;background:linear-gradient(#fbfbfb,#f0f0f0 60%,#e9e9e9);"></div>
<div class="a" style="left:482px;top:85px;width:36px;height:22px;border:1px solid #d2d2d2;background:linear-gradient(#fbfbfb,#f0f0f0 60%,#e9e9e9);"></div>
<svg style="left:393px;top:87px;" width="18" height="18" viewBox="0 0 18 18"><circle cx="9" cy="9" r="6.800" fill="#fdfdfd" stroke="#444" stroke-width="1.200"/><path d="M9.500 12l-5-7M9.500 12l2-9.500M9.500 12l6-3.500M9.500 12l-7 .5M9.500 12l-1 4" stroke="#444" stroke-width="1" fill="none"/></svg>
<svg style="left:414.5px;top:94.5px;" width="6" height="3.5" viewBox="0 0 6 3.5"><path d="M0 0h6l-3.0 3.5z" fill="#333"/></svg>
<svg style="left:426px;top:86px;" width="20" height="20" viewBox="0 0 20 20"><path d="M2 10.500l3.500-6.500q4.500-2.500 9 0l3.500 6.500v4.500l-8 3.500-8-3.500z" fill="#f2f4f7" stroke="#4a4e58" stroke-width="1" stroke-linejoin="round"/><path d="M2 10.500l8 3 8-3M10 13.500v5" fill="none" stroke="#4a4e58" stroke-width=".9"/><path d="M6 5.500q4-2 8 0l-1.500 4h-5z" fill="#b5dcf4" stroke="#6aa6d0" stroke-width=".6"/></svg>
<svg style="left:450px;top:86px;" width="22" height="20" viewBox="0 0 22 20"><rect x="1.500" y="1.500" width="3.500" height="3.500" fill="#3c78c8" stroke="#1d3f7a" stroke-width=".6"/><rect x="6.500" y="1.500" width="3.500" height="3.500" fill="#d03a2a" stroke="#7a1d12" stroke-width=".6"/><rect x="1.500" y="6.500" width="3.500" height="3.500" fill="#f0a030" stroke="#8a5a10" stroke-width=".6"/><path d="M7.500 10.500l3-2.500h7.500v7l-3 3h-7.500z" fill="#f39a1e" stroke="#6a4a2a" stroke-width=".8"/><path d="M10.500 8l-3 2.500h7.500l3-2.500z" fill="#bfe0f5" stroke="#446a8a" stroke-width=".6"/><path d="M15 10.500l3-2.500v7l-3 3z" fill="#b02a30"/></svg>
<svg style="left:472px;top:94.5px;" width="6" height="3.5" viewBox="0 0 6 3.5"><path d="M0 0h6l-3.0 3.5z" fill="#333"/></svg>
<svg style="left:485px;top:85px;" width="24" height="22" viewBox="0 0 24 22"><defs><radialGradient id="bl" cx=".35" cy=".3" r=".8"><stop offset="0" stop-color="#8ec2f4"/><stop offset=".5" stop-color="#2f7ad6"/><stop offset="1" stop-color="#124a9e"/></radialGradient></defs><circle cx="9" cy="12.500" r="7" fill="url(#bl)"/><path d="M12.500 3l6 6M18.500 3l-6 6" stroke="#e02030" stroke-width="2.200"/></svg>
<svg style="left:507.5px;top:94.5px;" width="6" height="3.5" viewBox="0 0 6 3.5"><path d="M0 0h6l-3.0 3.5z" fill="#333"/></svg>
<div class="a" style="left:388px;top:110px;width:24px;height:22px;border:1px solid #d2d2d2;background:linear-gradient(#fbfbfb,#f0f0f0 60%,#e9e9e9);"></div>
<svg style="left:390px;top:111px;" width="20" height="20" viewBox="0 0 20 20"><path d="M2.500 5.500l3-3h12v12l-3 3h-12z" fill="#fafafa" stroke="#444" stroke-width="1.100" stroke-linejoin="round"/><circle cx="9.500" cy="10.500" r="5" fill="#cfd2d6" stroke="#999" stroke-width=".6"/><path d="M6 8q3 4 7 5" stroke="#eee" stroke-width="1" fill="none"/></svg>
<div class="a" style="left:419px;top:110px;width:156px;height:22px;border:1px solid #dedede;background:#fff"></div>
<div class="a" style="left:421px;top:112px;width:76px;height:18px;background:#e9eaeb"></div>
<div class="a" style="left:548px;top:111px;width:1px;height:20px;background:#e2e2e2"></div>
<div class="a" style="left:425.4px;top:114px;font-size:12.6px;line-height:16px;color:#c2c2c2;letter-spacing:-0.42px;white-space:pre;">Opacity</div>
<div class="a" style="left:555.7px;top:114px;font-size:12.6px;line-height:16px;color:#b8b8b8;letter-spacing:-0.86px;white-space:pre;">60</div>
<div class="a" style="left:436.2px;top:136px;font-size:12.4px;line-height:16px;color:#444;letter-spacing:-0.47px;white-space:pre;">Visual Styles</div>
<svg style="left:507.6px;top:142.8px;" width="7.5" height="3.8" viewBox="0 0 7.5 3.8"><path d="M0 0h7.5l-3.75 3.8z" fill="#444"/></svg>
<svg style="left:567px;top:140px;" width="7" height="7" viewBox="0 0 7 7"><path d="M1 1l4 4M5.500 1.500v4h-4" stroke="#555" stroke-width="1.200" fill="none"/></svg>
<svg style="left:585px;top:64px;" width="16" height="14" viewBox="0 0 16 14"><rect x=".5" y=".5" width="15" height="13" fill="#2f78c4" stroke="#1c4a80" stroke-width="1"/><rect x="1.500" y="1.500" width="3" height="2.800" fill="#fff"/><rect x="1.500" y="5.500" width="3" height="2.800" fill="#fff"/><rect x="1.500" y="9.500" width="3" height="2.800" fill="#fff"/><path d="M6.500 6l3-2.500h5v6l-3 3h-5z" fill="#8fd0f8"/><path d="M6.500 6h5v6.500M11.500 6l3-2.500" stroke="#fff" stroke-width=".7" fill="none"/><path d="M11.500 6l3-2.500v6l-3 3z" fill="#15396a"/></svg>
<div class="a" style="left:606.5px;top:64px;font-size:12.6px;line-height:16px;color:#3c3c3c;letter-spacing:-0.26px;white-space:pre;">Viewport Configurations List</div>
<svg style="left:762.4px;top:69.8px;" width="5" height="3" viewBox="0 0 5 3"><path d="M0 0h5l-2.5 3z" fill="#333"/></svg>
<svg style="left:585px;top:87px;" width="16" height="16" viewBox="0 0 16 16"><path d="M.8 .8h14.400v14.400h-8v-7.500h-6.400z" fill="#f4f4f4" stroke="#d4d4d4" stroke-width="1.400"/><path d="M3 3h10v10h-3.500v-7.500h-6.500z" fill="#fff" stroke="#e2e2e2" stroke-width=".8"/></svg>
<div class="a" style="left:606.5px;top:88px;font-size:12.6px;line-height:16px;color:#a6a6a6;letter-spacing:-0.45px;white-space:pre;">Create Polygonal</div>
<svg style="left:704.3px;top:93.5px;" width="5" height="3" viewBox="0 0 5 3"><path d="M0 0h5l-2.5 3z" fill="#999"/></svg>
<svg style="left:585px;top:111px;" width="16" height="16" viewBox="0 0 16 16"><rect x=".6" y=".6" width="12.500" height="11.500" fill="#fff" stroke="#333" stroke-width="1.100"/><rect x="2.500" y="2.500" width="3.500" height="3.500" fill="#4a98e0" stroke="#1c4a80" stroke-width=".7"/><rect x="8" y="2.500" width="3.500" height="3" fill="#fff" stroke="#444" stroke-width=".8"/><rect x="2.500" y="7.500" width="3.500" height="3" fill="#fff" stroke="#444" stroke-width=".8"/><rect x="7.500" y="9.500" width="8" height="6" rx="1" fill="#eef0f4" stroke="#222" stroke-width="1.100"/><path d="M9 12h1M11 12h3.500M9 14h1M11 14h3.500" stroke="#333" stroke-width=".8"/></svg>
<div class="a" style="left:606.5px;top:112px;font-size:12.6px;line-height:16px;color:#3c3c3c;letter-spacing:-0.52px;white-space:pre;">Named</div>
<svg style="left:778px;top:63px;" width="16" height="17" viewBox="0 0 16 17"><rect x=".8" y="2.800" width="12.500" height="12.500" fill="#fff" stroke="#333" stroke-width="1.100"/><rect x="3" y="5" width="8.500" height="8.500" fill="#e8e8e8" stroke="#bbb" stroke-width=".6"/><path d="M12.500 0v7M9 3.500h7M10 1l5 5M15 1l-5 5" stroke="#f08a10" stroke-width="1"/></svg>
<div class="a" style="left:798.4px;top:64px;font-size:12.6px;line-height:16px;color:#3c3c3c;letter-spacing:-0.54px;white-space:pre;">New</div>
<svg style="left:778px;top:88px;" width="15" height="14" viewBox="0 0 15 14"><rect x=".6" y=".6" width="13.500" height="12.800" rx="1" fill="#fff" stroke="#333" stroke-width="1.100"/><rect x="4" y="3.500" width="7" height="6.500" fill="#dff0fc" stroke="#1c5ca8" stroke-width="1.300"/><path d="M2.500 5h9M2.500 10h9" stroke="#1c5ca8" stroke-width=".0"/></svg>
<div class="a" style="left:798.4px;top:88px;font-size:12.6px;line-height:16px;color:#3c3c3c;letter-spacing:-0.45px;white-space:pre;">Clip</div>
<svg style="left:777px;top:111px;" width="16" height="16" viewBox="0 0 16 16"><rect x=".6" y=".6" width="14.800" height="14.800" rx="1" fill="#d8ecfa" stroke="#2a66a8" stroke-width="1.100"/><rect x="2.500" y="2.500" width="4.500" height="4" fill="#f2f2f2" stroke="#999" stroke-width=".7"/><rect x="9" y="2.500" width="4.500" height="4" fill="#f2f2f2" stroke="#999" stroke-width=".7"/><path d="M1 8.500h14" stroke="#2a66a8" stroke-width="1.200"/><path d="M8 9v6" stroke="#9cc8ea" stroke-width="1"/></svg>
<div class="a" style="left:798.4px;top:112px;font-size:12.6px;line-height:16px;color:#3c3c3c;letter-spacing:-0.63px;white-space:pre;">Join</div>
<div class="a" style="left:678.0px;top:136px;font-size:12.4px;line-height:16px;color:#444;letter-spacing:-0.28px;white-space:pre;">Viewports</div>
<svg style="left:837px;top:62px;" width="18" height="18" viewBox="0 0 18 18"><path d="M1 4q1.500-2 3 0t3 0 3 0h5M1 8.500q1.500-2 3 0t3 0h4" fill="none" stroke="#222" stroke-width="1"/><path d="M13 1.500l3.500 2.500-3.500 2.500zM9.500 6l3.500 2.500-3.500 2.500z" fill="#222"/><g transform="translate(9.500 7)"><path d="M0 3.500a3.300 3.300 0 1 1 5 2.800v1.500h-3.400v-1.500a3.300 3.300 0 0 1-1.600-2.800z" fill="#ffd24a" stroke="#c88a10" stroke-width=".7"/><rect x="1.800" y="8.200" width="3" height="2.300" fill="#555" /></g></svg>
<div class="a" style="left:858.4px;top:64px;font-size:12.6px;line-height:16px;color:#3c3c3c;letter-spacing:-0.60px;white-space:pre;">Show Flow</div>
<div class="a" style="left:833px;top:84px;width:99px;height:22px;background:#b9d6f3;border:1px solid #3c80d2"></div>
<svg style="left:837px;top:86px;" width="18" height="18" viewBox="0 0 18 18"><path d="M7.500 1l7 13.500h-14z" fill="#ffe868" stroke="#8a7a10" stroke-width="1" stroke-linejoin="round"/><path d="M7.500 5v5" stroke="#222" stroke-width="1.600"/><circle cx="7.500" cy="12.300" r="1" fill="#222"/><g transform="translate(10 7)"><path d="M0 3.500a3.300 3.300 0 1 1 5 2.800v1.500h-3.400v-1.500a3.300 3.300 0 0 1-1.600-2.800z" fill="#ffd24a" stroke="#c88a10" stroke-width=".7"/><rect x="1.800" y="8.200" width="3" height="2.300" fill="#555" /></g></svg>
<div class="a" style="left:858.4px;top:88px;font-size:12.6px;line-height:16px;color:#2a2a2a;letter-spacing:-0.32px;white-space:pre;">Solution Tips</div>
<svg style="left:837px;top:110px;" width="18" height="18" viewBox="0 0 18 18"><circle cx="8" cy="9" r="7" fill="#f4f5f7" stroke="#333" stroke-width="1.100"/><path d="M8 2v3M8 13v3M1 9h3" stroke="#333" stroke-width="1"/><path d="M11 4.500a2.300 2.300 0 0 1 4.500 0c0 1-.8 1.500-.8 2.500v8h-2.900v-8c0-1-.8-1.500-.8-2.500z" fill="#fff" stroke="#222" stroke-width="1"/></svg>
<div class="a" style="left:858.4px;top:112px;font-size:12.6px;line-height:16px;color:#3c3c3c;letter-spacing:-0.83px;white-space:pre;">Compass</div>
<div class="a" style="left:849.6px;top:136px;font-size:12.4px;line-height:16px;color:#444;letter-spacing:-0.72px;white-space:pre;">MEP View</div>
<svg style="left:907.5px;top:142.8px;" width="7.5" height="3.8" viewBox="0 0 7.5 3.8"><path d="M0 0h7.5l-3.75 3.8z" fill="#444"/></svg>
<svg style="left:953px;top:61px;" width="36" height="32" viewBox="0 0 36 32"><defs><linearGradient id="wg" x1="0" y1="0" x2="0" y2="1"><stop offset="0" stop-color="#fff"/><stop offset="1" stop-color="#cfd2d6"/></linearGradient></defs>
<rect x="2.500" y="2.500" width="19" height="15" fill="url(#wg)" stroke="#333" stroke-width="1.200"/><rect x="2.500" y="2.500" width="19" height="2.500" fill="#333"/>
<rect x="10.500" y="14.500" width="19" height="15" fill="url(#wg)" stroke="#333" stroke-width="1.200"/><rect x="10.500" y="14.500" width="19" height="2.500" fill="#333"/>
<path d="M26 5.500q5 0 5 5.500" fill="none" stroke="#222" stroke-width="1.500"/><path d="M27 2.500v6l-4-3z" fill="#222"/>
<path d="M7.500 27q-5 0-5-5.500" fill="none" stroke="#222" stroke-width="1.500"/><path d="M6.500 30v-6l4 3z" fill="#222"/></svg>
<div class="a" style="left:952.7px;top:98px;font-size:12.4px;line-height:16px;color:#3c3c3c;letter-spacing:-0.37px;white-space:pre;">Switch</div>
<div class="a" style="left:946.2px;top:114px;font-size:12.4px;line-height:16px;color:#3c3c3c;letter-spacing:-0.33px;white-space:pre;">Windows</div>
<svg style="left:997.6px;top:115.5px;" width="5" height="3" viewBox="0 0 5 3"><path d="M0 0h5l-2.5 3z" fill="#333"/></svg>
<div class="a" style="left:1004px;top:60px;width:24px;height:22px;border:1px solid #d2d2d2;background:linear-gradient(#fbfbfb,#f0f0f0 60%,#e9e9e9);"></div>
<div class="a" style="left:1004px;top:84px;width:24px;height:22px;border:1px solid #d2d2d2;background:linear-gradient(#fbfbfb,#f0f0f0 60%,#e9e9e9);"></div>
<div class="a" style="left:1004px;top:108px;width:24px;height:22px;border:1px solid #d2d2d2;background:linear-gradient(#fbfbfb,#f0f0f0 60%,#e9e9e9);"></div>
<svg style="left:1006px;top:61px;" width="20" height="20" viewBox="0 0 20 20"><rect x="2.500" y="2.500" width="15" height="5.500" fill="#fff" stroke="#333" stroke-width="1.200"/><rect x="2.500" y="11" width="15" height="5.500" fill="#fff" stroke="#333" stroke-width="1.200"/></svg>
<svg style="left:1006px;top:85px;" width="20" height="20" viewBox="0 0 20 20"><rect x="3" y="2.500" width="5.500" height="15" fill="#fff" stroke="#333" stroke-width="1.200"/><rect x="11.500" y="2.500" width="5.500" height="15" fill="#fff" stroke="#333" stroke-width="1.200"/></svg>
<svg style="left:1006px;top:109px;" width="20" height="20" viewBox="0 0 20 20"><rect x="2.500" y="2.500" width="10" height="8" fill="#eee" stroke="#333" stroke-width="1.200"/><rect x="4.500" y="5" width="10" height="8" fill="#eee" stroke="#333" stroke-width="1.200"/><rect x="6.500" y="7.500" width="11" height="9" fill="#f4f4f4" stroke="#333" stroke-width="1.200"/><path d="M6.500 9h11" stroke="#333" stroke-width="1.400"/></svg>
<div class="a" style="left:1033px;top:60px;width:1px;height:70px;background:#ddd"></div>
<div class="a" style="left:1069px;top:60px;width:1px;height:70px;background:#ddd"></div>
<div class="a" style="left:1040px;top:60px;width:24px;height:22px;background:#b9d6f3;border:1px solid #3c80d2"></div>
<svg style="left:1042px;top:61px;" width="20" height="20" viewBox="0 0 20 20"><rect x="2.500" y="2.500" width="14" height="11" fill="#f4f6f8" stroke="#333" stroke-width="1.200"/><path d="M2.500 4h14" stroke="#333" stroke-width="1.800"/><rect x="7.500" y="11" width="11" height="6.500" rx="1" fill="#5a5f6a" stroke="#222" stroke-width=".8"/><path d="M9 14.500h5M15 14.500h2" stroke="#e8e8e8" stroke-width="1.200"/></svg>
<svg style="left:1091px;top:60px;" width="34" height="34" viewBox="0 0 34 34"><rect x="1.500" y="2.500" width="27" height="24" fill="url(#wg)" stroke="#444" stroke-width="1.200"/><rect x="1.500" y="2.500" width="27" height="2" fill="#444"/>
<path d="M2 9.500h26M7.500 9.500v17" stroke="#555" stroke-width="1"/><path d="M3 7h5M10 7h5M17 7h5" stroke="#444" stroke-width="1.600"/><rect x="23" y="5.500" width="5" height="3.500" fill="#777"/>
<path d="M3 12h3M3 14h3M3 16h3M3 18h3M3 20h3M3 22h3M3 24h3" stroke="#666" stroke-width=".9"/>
<path d="M22.500 17.500a4 4 0 0 1 2.500-4v4h3.500v-4a4 4 0 0 1 2.500 4c0 2-1.500 3-1.800 4v8.500q-2.500 2-5 0v-8.500c-.3-1-1.700-2-1.700-4z" fill="#fff" stroke="#2a2a2a" stroke-width="1.100"/></svg>
<div class="a" style="left:1096.3px;top:98px;font-size:12.4px;line-height:16px;color:#3c3c3c;letter-spacing:-0.87px;white-space:pre;">User</div>
<div class="a" style="left:1084.5px;top:114px;font-size:12.4px;line-height:16px;color:#3c3c3c;letter-spacing:-0.27px;white-space:pre;">Interface</div>
<svg style="left:1134.2px;top:115.5px;" width="4.5" height="3" viewBox="0 0 4.5 3"><path d="M0 0h4.5l-2.25 3z" fill="#333"/></svg>
<div class="a" style="left:1008.5px;top:136px;font-size:12.4px;line-height:16px;color:#444;letter-spacing:-0.37px;white-space:pre;">Windows</div>
<svg style="left:1131px;top:140px;" width="7" height="7" viewBox="0 0 7 7"><path d="M1 1l4 4M5.500 1.500v4h-4" stroke="#555" stroke-width="1.200" fill="none"/></svg>
<!-- ===== work area frame ===== -->
<div class="a" style="left:10px;top:153px;width:1134px;height:7px;background:linear-gradient(#666,#6c6c6c 60%,#747474)"></div>
<div class="a" style="left:10px;top:160px;width:27px;height:518px;background:#6c6c6c"></div>
<div class="a" style="left:12px;top:163px;width:20px;height:509px;background:linear-gradient(90deg,#a6a6a6,#9a9a9a 30%,#747474);border:1px solid #5a5a5a;border-radius:2px 2px 0 0"></div>
<svg style="left:14px;top:165px;" width="16" height="6" viewBox="0 0 16 6"><rect x="1" y="0" width="1" height="1" fill="#111"/><rect x="1" y="2" width="1" height="1" fill="#111"/><rect x="3" y="0" width="1" height="1" fill="#111"/><rect x="3" y="2" width="1" height="1" fill="#111"/><rect x="5" y="0" width="1" height="1" fill="#111"/><rect x="5" y="2" width="1" height="1" fill="#111"/><rect x="7" y="0" width="1" height="1" fill="#111"/><rect x="7" y="2" width="1" height="1" fill="#111"/><rect x="9" y="0" width="1" height="1" fill="#111"/><rect x="9" y="2" width="1" height="1" fill="#111"/><rect x="11" y="0" width="1" height="1" fill="#111"/><rect x="11" y="2" width="1" height="1" fill="#111"/><rect x="13" y="0" width="1" height="1" fill="#111"/><rect x="13" y="2" width="1" height="1" fill="#111"/></svg>
<div class="a" style="left:15px;top:491px;width:14px;height:0;"><div style="position:absolute;left:0;top:0;transform-origin:0 0;transform:rotate(-90deg);font-size:11px;line-height:14px;color:#f4f4f4;white-space:nowrap;letter-spacing:0.4px">Drawing Recovery Manager</div></div>
<div class="a" style="left:35px;top:158px;width:1108px;height:424px;background:#8a8a8a;border:1px solid #9c9c9c"></div>
<div class="a" style="left:37px;top:160px;width:1087px;height:405px;background:#000"></div>
<div class="a" style="left:1124px;top:160px;width:18px;height:405px;background:linear-gradient(90deg,#f6f6f6,#ececec 60%,#e2e2e2);border-left:1px solid #fff"></div>
<svg style="left:1124px;top:160px;" width="18" height="405" viewBox="0 0 18 405"><path d="M5.500 11h7.500l-3.750-4.200z" fill="#333"/><path d="M5.500 394h7.500l-3.750 4.200z" fill="#333"/></svg>
<div class="a" style="left:1126px;top:491px;width:15px;height:15px;background:linear-gradient(90deg,#fafafa,#dcdcdc);border:1px solid #8f8f8f;border-radius:2px"></div>
<svg style="left:1058px;top:165px;" width="60" height="18" viewBox="0 0 60 18"><rect x="6" y="9.500" width="8" height="2.600" fill="#fff"/><rect x="26" y="7.500" width="6.500" height="5.500" fill="none" stroke="#fff" stroke-width="1.500"/><path d="M28.500 7v-2.500h7v6h-2.500" fill="none" stroke="#fff" stroke-width="1.400"/><path d="M46.500 5.500l7 7M53.500 5.500l-7 7" stroke="#fff" stroke-width="2.200"/></svg>
<div class="a" style="left:37px;top:565px;width:1087px;height:16px;background:#fff"></div>
<div class="a" style="left:37px;top:565px;width:60px;height:16px;background:#f2f2f2"></div>
<div class="a" style="left:37px;top:565px;width:15px;height:16px;border-right:1px solid #c8c8c8;border-left:1px solid #fff"></div>
<div class="a" style="left:52px;top:565px;width:15px;height:16px;border-right:1px solid #c8c8c8;border-left:1px solid #fff"></div>
<div class="a" style="left:67px;top:565px;width:15px;height:16px;border-right:1px solid #c8c8c8;border-left:1px solid #fff"></div>
<div class="a" style="left:82px;top:565px;width:15px;height:16px;border-right:1px solid #c8c8c8;border-left:1px solid #fff"></div>
<svg style="left:37px;top:565px;" width="60" height="16" viewBox="0 0 60 16"><path d="M4.500 3v10" stroke="#666" stroke-width="1.400"/><path d="M11 3v10l-5.500-5z" fill="#666"/><path d="M26 3v10l-5.500-5z" fill="#666"/><path d="M34.500 3v10l5.500-5z" fill="#666"/><path d="M49 3v10l5.500-5z" fill="#666"/><path d="M56 3v10" stroke="#666" stroke-width="1.400"/></svg>
<svg style="left:97px;top:565px;" width="165" height="16" viewBox="0 0 165 16"><path d="M1 0h51.500l-5 16h-41.500z" fill="#000"/><path d="M52.500 0l-5 16h105.500l5.500-16z" fill="#f1f1f1"/><path d="M153 16l5.500-16" stroke="#333" stroke-width="1.200"/><path d="M47.500 16l5-16" stroke="#000" stroke-width="1"/></svg>
<div class="a" style="left:109.3px;top:567px;font-size:11.2px;line-height:15px;color:#fff;letter-spacing:-0.56px;white-space:pre;">Model</div>
<div class="a" style="left:155.2px;top:567px;font-size:11.2px;line-height:15px;color:#111;letter-spacing:-0.37px;white-space:pre;">V-3140-001-A-R35</div>
<div class="a" style="left:754px;top:565px;width:370px;height:16px;background:linear-gradient(#f6f6f6,#eee 50%,#e4e4e4)"></div>
<div class="a" style="left:754px;top:566px;width:5px;height:14px;background:#f4f4f4;border:1px solid #999;border-radius:1px"></div>
<svg style="left:760px;top:565px;" width="364" height="16" viewBox="0 0 364 16"><path d="M10 4v8l-4.500-4z" fill="#333"/><path d="M354.500 4v8l4.500-4z" fill="#333"/></svg>
<div class="a" style="left:1091px;top:566px;width:15px;height:14px;background:linear-gradient(#fafafa,#d9d9d9);border:1px solid #8f8f8f;border-radius:2px"></div>
<div class="a" style="left:1124px;top:565px;width:18px;height:16px;background:#eaeaea"></div>
<div class="a" style="left:37px;top:581px;width:1105px;height:1px;background:#2a2a2a"></div>
<div class="a" style="left:37px;top:582px;width:1105px;height:23px;background:linear-gradient(#8c8c8c,#7c7c7c 60%,#767676)"></div>
<div class="a" style="left:35px;top:605px;width:1109px;height:2px;background:#fdfdfd"></div>
<div class="a" style="left:33px;top:607px;width:1111px;height:4px;background:#6a6a6a"></div>
<div class="a" style="left:767px;top:583px;width:52px;height:22px;background:linear-gradient(#c2c2c2,#b0b0b0 50%,#a3a3a3);border-left:1px solid #dcdcdc;border-right:1px solid #6c6c6c;"></div>
<svg style="left:770px;top:585px;" width="17" height="19" viewBox="0 0 17 19"><path d="M8 1.500l2.200 9.500 5.300 6-6-3.500-1.500 1-1.500-1-6 3.500 5.300-6z" fill="#fdfdfd" stroke="#222" stroke-width="1" stroke-linejoin="round"/></svg>
<div class="a" style="left:788.5px;top:588px;font-size:11px;line-height:14px;color:#000;letter-spacing:-0.26px;white-space:pre;-webkit-text-stroke:0.12px #000;">1:1</div>
<svg style="left:806px;top:592px;" width="9" height="5" viewBox="0 0 9 5"><path d="M0 0h8.500l-4.250 4.500z" fill="#111"/></svg>
<div class="a" style="left:819px;top:583px;width:22px;height:22px;background:linear-gradient(#c2c2c2,#b0b0b0 50%,#a3a3a3);border-left:1px solid #dcdcdc;border-right:1px solid #6c6c6c;"></div>
<div class="a" style="left:841px;top:583px;width:22px;height:22px;background:linear-gradient(#c2c2c2,#b0b0b0 50%,#a3a3a3);border-left:1px solid #dcdcdc;border-right:1px solid #6c6c6c;"></div>
<svg style="left:821px;top:585px;" width="20" height="19" viewBox="0 0 20 19"><g transform="scale(.9)"><path d="M8 1.500l2.200 9.500 5.300 6-6-3.500-1.500 1-1.500-1-6 3.500 5.300-6z" fill="#fdfdfd" stroke="#222" stroke-width="1" stroke-linejoin="round"/></g><circle cx="14" cy="11" r="3.300" fill="#ffd24a" stroke="#c88a10" stroke-width=".6"/><rect x="12.800" y="14" width="2.400" height="2.500" fill="#ddd" stroke="#666" stroke-width=".4"/></svg>
<svg style="left:843px;top:585px;" width="20" height="19" viewBox="0 0 20 19"><g transform="translate(2 1) scale(.9)"><path d="M8 1.500l2.200 9.500 5.300 6-6-3.500-1.500 1-1.500-1-6 3.500 5.300-6z" fill="#fdfdfd" stroke="#222" stroke-width="1" stroke-linejoin="round"/></g><path d="M6 1l-4 5h3l-2 4 6-6h-3l3-3z" fill="#f6a818" stroke="#b86a08" stroke-width=".4"/></svg>
<div class="a" style="left:868px;top:583px;width:64px;height:22px;background:linear-gradient(#c2c2c2,#b0b0b0 50%,#a3a3a3);border-left:1px solid #dcdcdc;border-right:1px solid #6c6c6c;"></div>
<div class="a" style="left:870.3px;top:588px;font-size:11.6px;line-height:15px;color:#000;letter-spacing:-0.70px;white-space:pre;-webkit-text-stroke:0.12px #000;">Standard</div>
<svg style="left:918.5px;top:592px;" width="9" height="5" viewBox="0 0 9 5"><path d="M0 0h8.500l-4.250 4.500z" fill="#111"/></svg>
<div class="a" style="left:934.0px;top:588px;font-size:11.6px;line-height:15px;color:#000;letter-spacing:-0.50px;white-space:pre;-webkit-text-stroke:0.12px #000;">Cut Plane:  1400</div>
<div class="a" style="left:1020px;top:585px;width:104px;height:18px;background:linear-gradient(#b4b4b4,#9c9c9c);border:1px solid #6a6a6a;border-right-color:#ccc;border-bottom-color:#bbb"></div>
<svg style="left:1023px;top:586px;" width="20" height="16" viewBox="0 0 20 16"><path d="M1.500 3l3-2h10v10l-3 3h-10z" fill="#f4f4f4" stroke="#333" stroke-width=".8"/><path d="M3 6l6 7M5 4l7 8M8 3l5 6" stroke="#555" stroke-width=".9"/><g transform="translate(10.500 5)"><circle cx="3.300" cy="3.300" r="3.300" fill="#ffd24a" stroke="#d8901a" stroke-width=".7"/><rect x="2" y="6.500" width="2.600" height="3" fill="#f4f4f4" stroke="#777" stroke-width=".4"/></g></svg>
<svg style="left:1043px;top:586px;" width="20" height="16" viewBox="0 0 20 16"><path d="M1 6l5-5h12l-5 5z" fill="#dfe9f6" stroke="#2a5a9c" stroke-width=".9"/><path d="M1 11l5-5h12l-5 5z" fill="#f6f6f6" stroke="#444" stroke-width=".8"/><path d="M8.500 3v7M6.500 8l2 2.500 2-2.500" stroke="#111" stroke-width="1.100" fill="none"/><g transform="translate(11 6)"><circle cx="3.300" cy="3.300" r="3.300" fill="#ffd24a" stroke="#d8901a" stroke-width=".7"/><rect x="2" y="6.500" width="2.600" height="3" fill="#f4f4f4" stroke="#777" stroke-width=".4"/></g></svg>
<svg style="left:1063px;top:586px;" width="20" height="16" viewBox="0 0 20 16"><path d="M2 3.500l4-2v13l-4 1z" fill="#3a88d8" stroke="#1a4a90" stroke-width=".7"/><path d="M6.500 2l2 1v12l-2-.5z" fill="#1a4a90"/><path d="M9 3h9l-3 5h-4z" fill="#7ab8ee" opacity=".9"/><path d="M11 9l5 3-3 3.500-3-2z" fill="#9a9a9a" stroke="#555" stroke-width=".5"/></svg>
<svg style="left:1083px;top:586px;" width="20" height="16" viewBox="0 0 20 16"><path d="M2 2h9l3 3v9h-12z" fill="#2c5c9e" stroke="#163a6c" stroke-width=".7"/><rect x="3" y="8" width="11" height="6.500" fill="#f2c230" stroke="#9a7a10" stroke-width=".6"/><circle cx="5" cy="4" r="1.600" fill="#fff"/><path d="M5 4h5M5 4v5" stroke="#fff" stroke-width=".9"/><path d="M9 11.500l2.500 2.500 5-6" stroke="#1ea01e" stroke-width="2.200" fill="none"/></svg>
<svg style="left:1103px;top:585px;" width="20" height="19" viewBox="0 0 20 19"><path d="M5 6.500a5 5 0 1 1 7.500 4.300l-.5 3h-4l-.5-3a5 5 0 0 1-2.500-4.300z" fill="#ffe9a0" stroke="#d8a030" stroke-width=".8"/><rect x="8.300" y="13.800" width="3.400" height="3.700" fill="#f4f4f4" stroke="#777" stroke-width=".5"/></svg>
<div class="a" style="left:1130px;top:583px;width:12px;height:22px;background:linear-gradient(#c2c2c2,#b0b0b0 50%,#a3a3a3);border-left:1px solid #dcdcdc;border-right:1px solid #6c6c6c;"></div>
<svg style="left:1132px;top:591px;" width="8" height="6" viewBox="0 0 8 6"><path d="M0 0h7l-3.500 4.500z" fill="#111"/></svg>
<!-- ===== command line ===== -->
<div class="a" style="left:35px;top:611px;width:16px;height:67px;background:#a2a2a2;border-radius:3px 0 0 0"></div>
<svg style="left:37px;top:614px;" width="12" height="5" viewBox="0 0 12 5"><rect x="0.0" y="0" width="1" height="1" fill="#111"/><rect x="0.0" y="2" width="1" height="1" fill="#111"/><rect x="1.7" y="0" width="1" height="1" fill="#111"/><rect x="1.7" y="2" width="1" height="1" fill="#111"/><rect x="3.4" y="0" width="1" height="1" fill="#111"/><rect x="3.4" y="2" width="1" height="1" fill="#111"/><rect x="5.1" y="0" width="1" height="1" fill="#111"/><rect x="5.1" y="2" width="1" height="1" fill="#111"/><rect x="6.8" y="0" width="1" height="1" fill="#111"/><rect x="6.8" y="2" width="1" height="1" fill="#111"/><rect x="8.5" y="0" width="1" height="1" fill="#111"/><rect x="8.5" y="2" width="1" height="1" fill="#111"/><rect x="10.2" y="0" width="1" height="1" fill="#111"/><rect x="10.2" y="2" width="1" height="1" fill="#111"/></svg>
<div class="a" style="left:50px;top:611px;width:1094px;height:67px;background:#fff"></div>
<div class="a" style="left:50px;top:659px;width:1078px;height:1px;background:#9a9a9a"></div>
<div class="a" style="left:1127px;top:611px;width:16px;height:48px;background:linear-gradient(90deg,#f4f4f4,#e6e6e6)"></div>
<svg style="left:1127px;top:611px;" width="16" height="48" viewBox="0 0 16 48"><path d="M4.500 10.500h7l-3.500-4zM4.500 37h7l-3.500 4z" fill="#444"/></svg>
<div class="a" style="left:1057px;top:660px;width:69px;height:17px;background:linear-gradient(#f4f4f4,#e6e6e6)"></div>
<svg style="left:1057px;top:660px;" width="69" height="17" viewBox="0 0 69 17"><path d="M13 5v8l-4.500-4zM57.500 5v8l4.500-4z" fill="#333"/></svg>
<div class="a" style="left:1077px;top:661px;width:15px;height:15px;background:linear-gradient(#fafafa,#d4d4d4);border:1px solid #8f8f8f;border-radius:2px"></div>
<div class="a" style="left:1126px;top:660px;width:17px;height:17px;background:#ececec"></div>
<div class="cmd" style="left:52.500px;top:612px">Command: '_3dorbit Press ESC or ENTER to exit, or right-click to display</div>
<div class="cmd" style="left:52.500px;top:628px">shortcut-menu.</div>
<div class="cmd" style="left:52.500px;top:644px">Regenerating model.</div>
<div class="cmd" style="left:52.500px;top:663px">Command:</div>
<!-- ===== application status bar ===== -->
<div class="a" style="left:10px;top:678px;width:1134px;height:1px;background:#111"></div>
<div class="a" style="left:10px;top:679px;width:1134px;height:22px;background:linear-gradient(#989898,#888 50%,#7c7c7c)"></div>
<div class="a" style="left:10px;top:679px;width:199px;height:22px;background:linear-gradient(#b0b0b0,#9c9c9c 50%,#8c8c8c)"></div>
<div class="a" style="left:22.7px;top:683px;font-size:11.6px;line-height:15px;color:#000;letter-spacing:-0.41px;white-space:pre;-webkit-text-stroke:0.12px #000;">122156.909, 53953.680, 0.000</div>
<div class="a" style="left:210px;top:679px;width:22px;height:21px;background:linear-gradient(#c2c2c2,#b0b0b0 50%,#a3a3a3);border-left:1px solid #dcdcdc;border-right:1px solid #6c6c6c;"></div>
<svg style="left:210px;top:679px;" width="22" height="21" viewBox="0 0 22 21"><path d="M2 8h13M8.500 2v13" stroke="#111" stroke-width="1.300"/><rect x="6" y="5.500" width="5" height="5" fill="none" stroke="#111" stroke-width="1"/><rect x="13" y="9.500" width="3.500" height="3.500" fill="#fff" stroke="#2a6ac8" stroke-width="1"/><rect x="10.500" y="13.500" width="3.500" height="3.500" fill="#fff" stroke="#c83a2a" stroke-width="1"/></svg>
<div class="a" style="left:232px;top:679px;width:22px;height:21px;background:linear-gradient(#c2c2c2,#b0b0b0 50%,#a3a3a3);border-left:1px solid #dcdcdc;border-right:1px solid #6c6c6c;"></div>
<svg style="left:232px;top:679px;" width="22" height="21" viewBox="0 0 22 21"><rect x="5.0" y="4.0" width="1" height="1" fill="#111"/><rect x="5.0" y="6.5" width="1" height="1" fill="#111"/><rect x="5.0" y="9.0" width="1" height="1" fill="#111"/><rect x="7.5" y="4.0" width="1" height="1" fill="#111"/><rect x="7.5" y="6.5" width="1" height="1" fill="#111"/><rect x="7.5" y="9.0" width="1" height="1" fill="#111"/><rect x="10.0" y="4.0" width="1" height="1" fill="#111"/><rect x="10.0" y="6.5" width="1" height="1" fill="#111"/><rect x="10.0" y="9.0" width="1" height="1" fill="#111"/><rect x="12.5" y="4.0" width="1" height="1" fill="#111"/><rect x="12.5" y="6.5" width="1" height="1" fill="#111"/><rect x="12.5" y="9.0" width="1" height="1" fill="#111"/><path d="M4.500 14.500h8" stroke="#111" stroke-width="1.300"/><path d="M15 4v1.500M15 7v6" stroke="#111" stroke-width="1.400"/></svg>
<div class="a" style="left:254px;top:679px;width:22px;height:21px;background:linear-gradient(#c2c2c2,#b0b0b0 50%,#a3a3a3);border-left:1px solid #dcdcdc;border-right:1px solid #6c6c6c;"></div>
<svg style="left:254px;top:679px;" width="22" height="21" viewBox="0 0 22 21"><rect x="3" y="3" width="14.500" height="14.500" fill="#222"/><rect x="4.3" y="4.3" width="2.300" height="2.300" fill="#f4f4f4"/><rect x="4.3" y="7.7" width="2.300" height="2.300" fill="#f4f4f4"/><rect x="4.3" y="11.1" width="2.300" height="2.300" fill="#f4f4f4"/><rect x="4.3" y="14.5" width="2.300" height="2.300" fill="#f4f4f4"/><rect x="7.7" y="4.3" width="2.300" height="2.300" fill="#f4f4f4"/><rect x="7.7" y="7.7" width="2.300" height="2.300" fill="#f4f4f4"/><rect x="7.7" y="11.1" width="2.300" height="2.300" fill="#f4f4f4"/><rect x="7.7" y="14.5" width="2.300" height="2.300" fill="#f4f4f4"/><rect x="11.1" y="4.3" width="2.300" height="2.300" fill="#f4f4f4"/><rect x="11.1" y="7.7" width="2.300" height="2.300" fill="#f4f4f4"/><rect x="11.1" y="11.1" width="2.300" height="2.300" fill="#f4f4f4"/><rect x="11.1" y="14.5" width="2.300" height="2.300" fill="#f4f4f4"/><rect x="14.5" y="4.3" width="2.300" height="2.300" fill="#f4f4f4"/><rect x="14.5" y="7.7" width="2.300" height="2.300" fill="#f4f4f4"/><rect x="14.5" y="11.1" width="2.300" height="2.300" fill="#f4f4f4"/><rect x="14.5" y="14.5" width="2.300" height="2.300" fill="#f4f4f4"/></svg>
<div class="a" style="left:276px;top:679px;width:22px;height:21px;background:linear-gradient(#c2c2c2,#b0b0b0 50%,#a3a3a3);border-left:1px solid #dcdcdc;border-right:1px solid #6c6c6c;"></div>
<svg style="left:276px;top:679px;" width="22" height="21" viewBox="0 0 22 21"><path d="M3.500 3v14.500h15" fill="none" stroke="#333" stroke-width="1.200"/><path d="M3.500 11h6v6.500" fill="none" stroke="#333" stroke-width="1"/></svg>
<div class="a" style="left:298px;top:679px;width:22px;height:21px;background:linear-gradient(#cfe8f2,#a9d5e6 50%,#8fc6dc);border-left:1px solid #dcdcdc;border-right:1px solid #6c6c6c;"></div>
<svg style="left:298px;top:679px;" width="22" height="21" viewBox="0 0 22 21"><path d="M14 11a4.500 4.500 0 1 1-4.500-4.500" fill="none" stroke="#333" stroke-width="1.400"/><path d="M7 13l9-7M9.500 11h7.500" stroke="#111" stroke-width="1.300"/></svg>
<div class="a" style="left:320px;top:679px;width:22px;height:21px;background:linear-gradient(#cfe8f2,#a9d5e6 50%,#8fc6dc);border-left:1px solid #dcdcdc;border-right:1px solid #6c6c6c;"></div>
<svg style="left:320px;top:679px;" width="22" height="21" viewBox="0 0 22 21"><rect x="5.500" y="5.500" width="12" height="12" fill="#fafafa" stroke="#333" stroke-width="1.200"/><circle cx="5" cy="4.500" r="2" fill="#fff" stroke="#e0702a" stroke-width="1.200"/></svg>
<div class="a" style="left:342px;top:679px;width:22px;height:21px;background:linear-gradient(#cfe8f2,#a9d5e6 50%,#8fc6dc);border-left:1px solid #dcdcdc;border-right:1px solid #6c6c6c;"></div>
<svg style="left:342px;top:679px;" width="22" height="21" viewBox="0 0 22 21"><path d="M5.500 7l3-3h9.500v9.500l-3 3h-9.500z" fill="#e8e8ec" stroke="#333" stroke-width="1.100"/><path d="M5.500 7h9.500v9.500M15 7l3-3" fill="none" stroke="#555" stroke-width=".8"/><circle cx="5.500" cy="16.500" r="2.200" fill="#fff" stroke="#e0702a" stroke-width="1.300"/></svg>
<div class="a" style="left:364px;top:679px;width:22px;height:21px;background:linear-gradient(#cfe8f2,#a9d5e6 50%,#8fc6dc);border-left:1px solid #dcdcdc;border-right:1px solid #6c6c6c;"></div>
<svg style="left:364px;top:679px;" width="22" height="21" viewBox="0 0 22 21"><path d="M5 15.500h12M5 15.500l10-9" stroke="#111" stroke-width="1.400" fill="none"/></svg>
<div class="a" style="left:386px;top:679px;width:22px;height:21px;background:linear-gradient(#c2c2c2,#b0b0b0 50%,#a3a3a3);border-left:1px solid #dcdcdc;border-right:1px solid #6c6c6c;"></div>
<svg style="left:386px;top:679px;" width="22" height="21" viewBox="0 0 22 21"><path d="M4.500 3v14.500h14" fill="none" stroke="#333" stroke-width="1.200"/><path d="M2.500 5l2-3.500 2 3.500zM17 15.500l3.500 2-3.500 2z" fill="#333"/><path d="M4.500 17.500l9-9" stroke="#333" stroke-width="1"/><path d="M14 3l-3 4h2.500l-1.500 3.500 5-5h-2.500l2-2.500z" fill="#f6a818" stroke="#b86a08" stroke-width=".4"/></svg>
<div class="a" style="left:408px;top:679px;width:22px;height:21px;background:linear-gradient(#c2c2c2,#b0b0b0 50%,#a3a3a3);border-left:1px solid #dcdcdc;border-right:1px solid #6c6c6c;"></div>
<svg style="left:408px;top:679px;" width="22" height="21" viewBox="0 0 22 21"><path d="M4 9h9M8.500 4.500v9" stroke="#111" stroke-width="1.500"/><rect x="10.500" y="11.500" width="6" height="3" fill="#fff" stroke="#111" stroke-width="1.100"/></svg>
<div class="a" style="left:430px;top:679px;width:22px;height:21px;background:linear-gradient(#c2c2c2,#b0b0b0 50%,#a3a3a3);border-left:1px solid #dcdcdc;border-right:1px solid #6c6c6c;"></div>
<svg style="left:430px;top:679px;" width="22" height="21" viewBox="0 0 22 21"><path d="M3.500 9h14" stroke="#111" stroke-width="2.600"/><path d="M11 3v14" stroke="#111" stroke-width="1.400"/></svg>
<div class="a" style="left:452px;top:679px;width:22px;height:21px;background:linear-gradient(#cfe8f2,#a9d5e6 50%,#8fc6dc);border-left:1px solid #dcdcdc;border-right:1px solid #6c6c6c;"></div>
<svg style="left:452px;top:679px;" width="22" height="21" viewBox="0 0 22 21"><rect x="3.500" y="3.500" width="14" height="14" fill="#a8d4ec" stroke="#2a6ab0" stroke-width="1.300"/><rect x="4.5" y="4.5" width="1" height="1" fill="#e8f4fc"/><rect x="4.5" y="8.5" width="1" height="1" fill="#e8f4fc"/><rect x="4.5" y="12.5" width="1" height="1" fill="#e8f4fc"/><rect x="6.5" y="6.5" width="1" height="1" fill="#e8f4fc"/><rect x="6.5" y="10.5" width="1" height="1" fill="#e8f4fc"/><rect x="6.5" y="14.5" width="1" height="1" fill="#e8f4fc"/><rect x="8.5" y="4.5" width="1" height="1" fill="#e8f4fc"/><rect x="8.5" y="8.5" width="1" height="1" fill="#e8f4fc"/><rect x="8.5" y="12.5" width="1" height="1" fill="#e8f4fc"/><rect x="10.5" y="6.5" width="1" height="1" fill="#e8f4fc"/><rect x="10.5" y="10.5" width="1" height="1" fill="#e8f4fc"/><rect x="10.5" y="14.5" width="1" height="1" fill="#e8f4fc"/><rect x="12.5" y="4.5" width="1" height="1" fill="#e8f4fc"/><rect x="12.5" y="8.5" width="1" height="1" fill="#e8f4fc"/><rect x="12.5" y="12.5" width="1" height="1" fill="#e8f4fc"/><rect x="14.5" y="6.5" width="1" height="1" fill="#e8f4fc"/><rect x="14.5" y="10.5" width="1" height="1" fill="#e8f4fc"/><rect x="14.5" y="14.5" width="1" height="1" fill="#e8f4fc"/></svg>
<div class="a" style="left:474px;top:679px;width:22px;height:21px;background:linear-gradient(#c2c2c2,#b0b0b0 50%,#a3a3a3);border-left:1px solid #dcdcdc;border-right:1px solid #6c6c6c;"></div>
<svg style="left:474px;top:679px;" width="22" height="21" viewBox="0 0 22 21"><rect x="6.500" y="4.500" width="8" height="11" fill="#fff" stroke="#111" stroke-width="1.500"/><path d="M8.500 8h1.500M11 8h1.500M8.500 10.500h1.500M11 10.500h1.500M8.500 13h1.500M11 13h1.500" stroke="#111" stroke-width="1.200"/></svg>
<div class="a" style="left:496px;top:679px;width:22px;height:21px;background:linear-gradient(#c2c2c2,#b0b0b0 50%,#a3a3a3);border-left:1px solid #dcdcdc;border-right:1px solid #6c6c6c;"></div>
<svg style="left:496px;top:679px;" width="22" height="21" viewBox="0 0 22 21"><path d="M2 5h8M6 1v8" stroke="#222" stroke-width="1.200"/><rect x="7.500" y="7.500" width="8" height="7" rx="1" fill="#fff" stroke="#333" stroke-width="1"/><rect x="10.500" y="10.500" width="8" height="7.500" rx="1" fill="#8cc44a" stroke="#3a7a1a" stroke-width="1.200"/></svg>
<div class="a" style="left:811px;top:679px;width:22px;height:21px;background:linear-gradient(#c2c2c2,#b0b0b0 50%,#a3a3a3);border-left:1px solid #dcdcdc;border-right:1px solid #6c6c6c;"></div>
<div class="a" style="left:833px;top:679px;width:22px;height:21px;background:linear-gradient(#c2c2c2,#b0b0b0 50%,#a3a3a3);border-left:1px solid #dcdcdc;border-right:1px solid #6c6c6c;"></div>
<svg style="left:811px;top:679px;" width="22" height="21" viewBox="0 0 22 21"><rect x="5.500" y="3.500" width="11" height="11" fill="#f4f4f4" stroke="#333" stroke-width="1"/><path d="M8 12.500v-6l5 6z" fill="#ddd" stroke="#111" stroke-width="1"/><path d="M3 17.500h16" stroke="#333" stroke-width="1.400"/></svg>
<svg style="left:833px;top:679px;" width="22" height="21" viewBox="0 0 22 21"><rect x="3.500" y="3.500" width="6.500" height="7" fill="#f4f4f4" stroke="#333" stroke-width="1"/><rect x="11.500" y="3.500" width="6.500" height="7" fill="#f4f4f4" stroke="#333" stroke-width="1"/><path d="M3 15.500h15" stroke="#333" stroke-width="2.400"/></svg>
<div class="a" style="left:855px;top:679px;width:17px;height:21px;background:linear-gradient(#848484,#6e6e6e)"></div>
<div class="a" style="left:872px;top:679px;width:23px;height:21px;background:linear-gradient(#c2c2c2,#b0b0b0 50%,#a3a3a3);border-left:1px solid #dcdcdc;border-right:1px solid #6c6c6c;"></div>
<div class="a" style="left:895px;top:679px;width:22px;height:21px;background:linear-gradient(#c2c2c2,#b0b0b0 50%,#a3a3a3);border-left:1px solid #dcdcdc;border-right:1px solid #6c6c6c;"></div>
<div class="a" style="left:917px;top:679px;width:21px;height:21px;background:linear-gradient(#c2c2c2,#b0b0b0 50%,#a3a3a3);border-left:1px solid #dcdcdc;border-right:1px solid #6c6c6c;"></div>
<svg style="left:872px;top:679px;" width="23" height="21" viewBox="0 0 23 21"><path d="M11 2.500l1.800 0 .6 2.200 1.800.8 2-1.200 1.300 1.300-1.200 2 .8 1.800 2.200.6v1.800l-2.200.6-.8 1.800 1.200 2-1.300 1.300-2-1.200-1.800.8-.6 2.200h-1.800l-.6-2.200-1.800-.8-2 1.200-1.300-1.300 1.200-2-.8-1.800-2.200-.6v-1.800l2.200-.6.800-1.800-1.200-2 1.300-1.300 2 1.200 1.800-.8z" fill="#e4e4e4" stroke="#222" stroke-width="1" transform="translate(-.9 -.6)"/><circle cx="11" cy="10.500" r="3" fill="#aaa" stroke="#222" stroke-width="1"/><path d="M19 13v6h-6z" fill="#111"/></svg>
<svg style="left:895px;top:679px;" width="22" height="21" viewBox="0 0 22 21"><rect x="3.500" y="9.500" width="10" height="8.500" fill="#f0f0f0" stroke="#222" stroke-width="1.300"/><path d="M8.500 11.500v4" stroke="#222" stroke-width="1.500"/><path d="M10.500 9.500v-2.500a3.300 3.300 0 0 1 6.600 0v2" fill="none" stroke="#222" stroke-width="1.800"/></svg>
<svg style="left:917px;top:679px;" width="21" height="21" viewBox="0 0 21 21"><rect x="2.500" y="5.500" width="11" height="7" fill="#9aa" stroke="#444" stroke-width="1"/><path d="M4 4v-1.500M7 4v-1.500M10 4v-1.500M4 15.500v-1.500M7 15.500v-1.500" stroke="#444" stroke-width="1"/><circle cx="14" cy="11.500" r="3.300" fill="#d8ecff" stroke="#4a90e0" stroke-width="1.200"/><rect x="12.800" y="14.500" width="2.400" height="4" fill="#fff" stroke="#4a90e0" stroke-width=".6"/></svg>
<div class="a" style="left:938px;top:679px;width:72px;height:21px;background:linear-gradient(#888,#767676)"></div>
<div class="a" style="left:942.0px;top:683px;font-size:11.6px;line-height:15px;color:#000;letter-spacing:-0.51px;white-space:pre;-webkit-text-stroke:0.12px #000;">Elevation:  +0</div>
<div class="a" style="left:1010px;top:679px;width:22px;height:21px;background:linear-gradient(#c2c2c2,#b0b0b0 50%,#a3a3a3);border-left:1px solid #dcdcdc;border-right:1px solid #6c6c6c;"></div>
<svg style="left:1010px;top:679px;" width="22" height="21" viewBox="0 0 22 21"><text x="1.500" y="9" font-size="9" font-weight="bold" fill="#111" font-family="Liberation Sans,sans-serif">Z</text><path d="M3 11l5 2 4-3 4 1.500v6l-4-1.500-4 3-5-2z" fill="#f4f4f4" stroke="#444" stroke-width=".8"/><path d="M9 5l4-2.500 3.500 1.500v5" fill="#eee" stroke="#444" stroke-width=".8"/><circle cx="15.500" cy="11.500" r="3" fill="#d8ecff" stroke="#4a90e0" stroke-width="1.100"/><rect x="14.500" y="14.500" width="2" height="3.500" fill="#fff" stroke="#4a90e0" stroke-width=".6"/></svg>
<div class="a" style="left:1032px;top:679px;width:62px;height:21px;background:linear-gradient(#868686,#747474)"></div>
<div class="a" style="left:1043px;top:681px;width:44px;height:16px;background:linear-gradient(#b0b0b0,#9a9a9a);border:1px solid #666;border-bottom-color:#bbb;border-right-color:#bbb"></div>
<svg style="left:1046px;top:682px;" width="20" height="15" viewBox="0 0 20 15"><rect x="2.500" y="1.500" width="9" height="11" fill="#e8e8ee" stroke="#555" stroke-width=".9"/><rect x="4" y="3" width="6" height="3" fill="#fff"/><rect x="7.500" y="7.500" width="8.500" height="7" fill="#fff" stroke="#333" stroke-width=".9"/><path d="M9 12.500l2.500-2.500 1 1.500 2.500-2.500" stroke="#e0202a" stroke-width="1.500" fill="none"/><rect x="2" y="12" width="3" height="2" fill="#333"/></svg>
<svg style="left:1066px;top:682px;" width="20" height="15" viewBox="0 0 20 15"><circle cx="5" cy="4" r="1.800" fill="#8ab8e8"/><circle cx="9.500" cy="2.500" r="1.800" fill="#9ad0a8"/><circle cx="3.500" cy="8" r="1.500" fill="#8ab8e8"/><path d="M5 4l5 4M9.500 2.500l2 5" stroke="#7aa0d0" stroke-width=".8"/><rect x="8.500" y="6.500" width="8" height="8" fill="#f4f8ff" stroke="#2a5aa8" stroke-width="1"/><path d="M10 9h5M10 11h5M10 13h5" stroke="#2a5aa8" stroke-width="1"/></svg>
<div class="a" style="left:1094px;top:679px;width:11px;height:21px;background:linear-gradient(#c2c2c2,#b0b0b0 50%,#a3a3a3);border-left:1px solid #dcdcdc;border-right:1px solid #6c6c6c;"></div>
<svg style="left:1096px;top:687px;" width="8" height="6" viewBox="0 0 8 6"><path d="M0 0h7l-3.500 4.500z" fill="#111"/></svg>
<div class="a" style="left:1105px;top:679px;width:22px;height:21px;background:linear-gradient(#c2c2c2,#b0b0b0 50%,#a3a3a3);border-left:1px solid #dcdcdc;border-right:1px solid #6c6c6c;"></div>
<svg style="left:1105px;top:679px;" width="22" height="21" viewBox="0 0 22 21"><rect x="4.500" y="3.500" width="13" height="13" fill="#f0f0f0" stroke="#222" stroke-width="1.200"/><path d="M4.500 5h13" stroke="#222" stroke-width="2.400"/><path d="M12 4.500h1M14 4.500h1M16 4.500h.8" stroke="#fff" stroke-width="1"/></svg>
<svg style="left:1127px;top:679px;" width="17" height="21" viewBox="0 0 17 21"><rect x="12" y="8" width="2" height="2" fill="#e8e8e8"/><rect x="9" y="11" width="2" height="2" fill="#e8e8e8"/><rect x="12" y="11" width="2" height="2" fill="#e8e8e8"/><rect x="6" y="14" width="2" height="2" fill="#e8e8e8"/><rect x="9" y="14" width="2" height="2" fill="#e8e8e8"/><rect x="12" y="14" width="2" height="2" fill="#e8e8e8"/><rect x="4" y="17" width="2" height="2" fill="#e8e8e8"/><rect x="8" y="17" width="2" height="2" fill="#e8e8e8"/><rect x="12" y="17" width="2" height="2" fill="#e8e8e8"/></svg>
<!-- ===== model space drawing ===== -->
<svg style="left:37px;top:160px;overflow:hidden" width="1087" height="405" viewBox="37 160 1087 405" shape-rendering="crispEdges" fill="none" stroke-width="1">
<path d="M37.0 358.0L98.0 339.0M98.0 339.0L157.0 362.0M37.0 404.0L113.0 435.0M113.0 435.0L277.0 501.5M277.0 501.5L330.6 523.2M37.0 430.6L190.5 380.3M119.0 468.0L229.0 430.0M229.0 430.0L262.0 419.0M204.0 503.0L254.0 485.6M254.0 485.6L300.0 470.0M300.0 470.0L420.0 431.0M289.0 538.0L330.6 523.2M330.6 523.2L440.0 486.0M440.0 486.0L585.3 440.3M335.0 524.5L440.0 488.5M200.0 470.3L330.6 523.2M585.6 533.8L631.0 553.0M683.5 503.8L727.0 523.0M480.0 413.0L604.4 374.0M604.4 374.0L575.0 362.0M480.0 413.0L420.0 433.0M420.0 356.5L508.0 337.0M420.0 366.0L478.0 347.6M380.0 366.0L420.0 356.5M476.0 413.0L541.0 395.3M458.0 480.0L553.5 450.0M555.3 450.0L585.3 440.3M400.0 499.4L453.0 483.5M638.5 486.0L671.0 475.2M290.0 346.0L340.0 331.0M352.0 390.0L420.0 368.0M356.0 402.0L440.0 376.0M152.9 363.3L276.4 410.9M154.1 360.3L277.6 407.9M276.4 410.9L399.4 463.5M277.6 407.9L400.6 460.5M399.4 463.5L545.9 518.5M400.6 460.5L547.1 515.5M545.7 518.4L576.8 537.0M547.3 515.6L578.4 534.2M299.2 323.4L416.8 391.4M300.8 320.6L418.4 388.6M416.9 391.5L529.3 441.8M418.3 388.5L530.7 438.8M637.9 487.7L682.9 504.5M639.1 484.7L684.1 501.5M638.0 484.7L596.5 499.5M639.0 487.7L597.5 502.5M596.6 499.5L554.3 511.1M597.4 502.5L555.1 514.1M203.5 378.5L262.5 358.5M202.5 375.5L261.5 355.5M262.5 358.5L300.5 345.5M261.5 355.5L299.5 342.5M331.5 425.5L382.5 408.5M330.5 422.5L381.5 405.5M452.5 481.5L399.5 499.5M453.5 484.5L400.5 502.5" stroke="#6e6e6e"/>
<path d="M153.5 361.8L277.0 321.2M277.0 321.2L340.0 300.5M577.6 535.6L683.5 503.0M683.5 503.0L741.0 482.6M664.0 493.2L719.7 474.7M719.7 474.7L741.0 482.6" stroke="#6e6e6e" stroke-width="3"/>
<path d="M245.0 330.6L249.0 334.1M249.2 329.2L253.2 332.7M253.4 327.9L257.4 331.4M257.6 326.5L261.6 330.0M261.8 325.1L265.8 328.6M266.0 323.8L270.0 327.3M270.2 322.4L274.2 325.9M274.4 321.0L278.4 324.5M278.6 319.7L282.6 323.2M282.8 318.3L286.8 321.8M287.0 317.0L291.0 320.5M291.2 315.6L295.2 319.1M295.4 314.2L299.4 317.7M299.6 312.9L303.6 316.4M303.8 311.5L307.8 315.0M308.0 310.1L312.0 313.6M312.2 308.8L316.2 312.3M316.4 307.4L320.4 310.9M320.6 306.0L324.6 309.5M324.8 304.7L328.8 308.2M329.0 303.3L333.0 306.8M333.2 301.9L337.2 305.4M245.0 334.0L338.0 304.0M532.0 443.3L533.2 438.9M534.5 444.4L535.7 440.0M537.0 445.4L538.2 441.0M539.5 446.5L540.7 442.1M542.0 447.5L543.2 443.1M544.5 448.6L545.7 444.2M547.0 449.6L548.2 445.2M549.5 450.7L550.7 446.3M552.0 451.8L553.2 447.4M554.5 452.8L555.7 448.4M557.0 453.9L558.2 449.5M559.5 454.9L560.7 450.5M562.0 456.0L563.2 451.6M564.5 457.0L565.7 452.6M567.0 458.1L568.2 453.7M569.5 459.2L570.7 454.8M572.0 460.2L573.2 455.8M574.5 461.3L575.7 456.9M577.0 462.3L578.2 457.9M579.5 463.4L580.7 459.0M582.0 464.4L583.2 460.1M584.5 465.5L585.7 461.1M587.0 466.6L588.2 462.2M589.5 467.6L590.7 463.2M592.0 468.7L593.2 464.3M594.5 469.7L595.7 465.3M597.0 470.8L598.2 466.4M599.5 471.9L600.7 467.5M602.0 472.9L603.2 468.5M604.5 474.0L605.7 469.6M607.0 475.0L608.2 470.6M609.5 476.1L610.7 471.7M612.0 477.1L613.2 472.7M614.5 478.2L615.7 473.8M617.0 479.3L618.2 474.9M619.5 480.3L620.7 475.9M622.0 481.4L623.2 477.0M624.5 482.4L625.7 478.0M627.0 483.5L628.2 479.1M629.5 484.5L630.7 480.1M632.0 485.6L633.2 481.2M634.5 486.7L635.7 482.3M530.0 437.8L640.0 484.3M530.0 443.2L636.0 488.0M305.0 326.6L306.0 323.4M308.3 328.5L309.3 325.3M311.6 330.4L312.6 327.2M314.9 332.3L315.9 329.1M318.2 334.2L319.2 331.0M321.5 336.1L322.5 332.9M324.8 338.0L325.8 334.8M328.1 340.0L329.1 336.8M331.4 341.9L332.4 338.7M334.7 343.8L335.7 340.6M338.0 345.7L339.0 342.5M341.3 347.6L342.3 344.4M344.6 349.5L345.6 346.3M347.9 351.4L348.9 348.2M351.2 353.3L352.2 350.1M354.5 355.2L355.5 352.0M357.8 357.1L358.8 353.9M361.1 359.0L362.1 355.8M364.4 360.9L365.4 357.7M367.7 362.8L368.7 359.6M371.0 364.7L372.0 361.5M374.3 366.7L375.3 363.5M377.6 368.6L378.6 365.4M380.9 370.5L381.9 367.3M384.2 372.4L385.2 369.2M387.5 374.3L388.5 371.1M390.8 376.2L391.8 373.0M394.1 378.1L395.1 374.9M397.4 380.0L398.4 376.8M400.7 381.9L401.7 378.7M404.0 383.8L405.0 380.6M407.3 385.7L408.3 382.5M410.6 387.6L411.6 384.4M413.9 389.5L414.9 386.3M666.2 494.3L722.1 475.6M668.3 495.4L724.4 476.5M670.5 496.5L726.8 477.3M672.7 497.6L729.2 478.2M674.8 498.6L731.5 479.1M677.0 499.7L733.9 480.0M679.2 500.8L736.3 480.8M681.3 501.9L738.6 481.7M668.6 491.7L688.3 501.3M673.3 490.1L693.1 499.6M677.9 488.6L697.9 497.9M682.6 487.0L702.7 496.2M687.2 485.5L707.5 494.5M691.9 483.9L712.2 492.8M696.5 482.4L717.0 491.1M701.1 480.9L721.8 489.4M705.8 479.3L726.6 487.7M710.4 477.8L731.4 486.0M715.1 476.2L736.2 484.3" stroke="#6a6a6a"/>
<ellipse cx="203" cy="377" rx="6" ry="3.200" fill="#6e6e6e"/><ellipse cx="300" cy="345.5" rx="6" ry="3.200" fill="#6e6e6e"/><ellipse cx="638.5" cy="486.2" rx="6" ry="3.200" fill="#6e6e6e"/><ellipse cx="330" cy="424" rx="6" ry="3.200" fill="#6e6e6e"/><ellipse cx="453" cy="482.5" rx="6" ry="3.200" fill="#6e6e6e"/><ellipse cx="546.5" cy="517" rx="6" ry="3.200" fill="#6e6e6e"/><ellipse cx="417.6" cy="390" rx="6" ry="3.200" fill="#6e6e6e"/><path d="M222 351q-9 4-3 9l14 4M262 342q-8 4 0 8M560 517q12 3 8 9l-20 3" stroke="#6e6e6e"/>
<path d="M37.0 405.9L548.0 240.0M561.0 236.0L800.0 160.0" stroke="#9aa86a"/><path d="M363.0 160.0L548.0 235.5M561.0 241.5L1124.0 474.5" stroke="#b8705a"/><path d="M554.5 160.0L554.5 232.0M554.5 244.0L554.5 565.0" stroke="#7aa2c8"/><rect x="548.500" y="232.500" width="12" height="12" stroke="#fff"/>
<path d="M296.2 454.4L296.2 473.0M302.7 471.0L302.7 497.6M321.8 446.5L321.8 464.0M331.5 458.0L331.5 478.0M355.3 455.3L355.3 480.0M385.3 443.0L385.3 461.5M302.7 497.6L331.5 488.8M331.5 488.8L355.3 480.0M355.3 480.0L385.3 470.0M302.7 497.6L268.8 482.6M302.7 471.0L331.5 461.0M296.2 473.0L268.8 462.0M331.5 478.0L355.3 470.0M321.8 464.0L296.2 454.4M331.5 458.0L385.3 443.0M355.3 455.3L321.8 446.5" stroke="#c8c8c8"/>
<path d="M263.6 348.6L279.6 355.3L289.4 352.0L273.4 345.3z" fill="#fff"/><rect x="270.4" y="347.0" width="2" height="3" fill="#000"/><rect x="273.8" y="348.3" width="2" height="3" fill="#000"/><rect x="277.2" y="349.3" width="2" height="3" fill="#000"/><rect x="280.6" y="350.6" width="2" height="3" fill="#000"/><path d="M230.1 360.1L246.1 366.8L255.9 363.5L239.9 356.8z" fill="#fff"/><rect x="236.9" y="357.6" width="2" height="3" fill="#000"/><rect x="240.3" y="359.9" width="2" height="3" fill="#000"/><rect x="243.7" y="361.2" width="2" height="3" fill="#000"/><rect x="247.1" y="362.0" width="2" height="3" fill="#000"/><path d="M242.4 378.6L258.4 385.3L268.2 382.0L252.2 375.3z" fill="#fff"/><rect x="249.2" y="377.1" width="2" height="3" fill="#000"/><rect x="252.6" y="378.5" width="2" height="3" fill="#000"/><rect x="256.0" y="378.9" width="2" height="3" fill="#000"/><rect x="259.4" y="380.3" width="2" height="3" fill="#000"/><path d="M247.7 397.1L263.7 403.8L273.6 400.5L257.6 393.8z" fill="#fff"/><rect x="254.5" y="394.7" width="2" height="3" fill="#000"/><rect x="257.9" y="396.5" width="2" height="3" fill="#000"/><rect x="261.3" y="397.8" width="2" height="3" fill="#000"/><rect x="264.7" y="399.5" width="2" height="3" fill="#000"/><path d="M312.1 369.8L328.1 376.5L337.9 373.2L321.9 366.5z" fill="#fff"/><rect x="318.9" y="367.4" width="2" height="3" fill="#000"/><rect x="322.3" y="368.7" width="2" height="3" fill="#000"/><rect x="325.7" y="370.5" width="2" height="3" fill="#000"/><rect x="329.1" y="371.6" width="2" height="3" fill="#000"/><path d="M312.1 381.3L328.1 388.0L337.9 384.7L321.9 378.0z" fill="#fff"/><rect x="318.9" y="379.4" width="2" height="3" fill="#000"/><rect x="322.3" y="381.0" width="2" height="3" fill="#000"/><rect x="325.7" y="382.5" width="2" height="3" fill="#000"/><rect x="329.1" y="384.1" width="2" height="3" fill="#000"/><path d="M341.1 380.3L357.1 387.0L366.9 383.7L350.9 377.0z" fill="#fff"/><rect x="347.9" y="378.6" width="2" height="3" fill="#000"/><rect x="351.3" y="380.1" width="2" height="3" fill="#000"/><rect x="354.7" y="381.1" width="2" height="3" fill="#000"/><rect x="358.1" y="382.3" width="2" height="3" fill="#000"/><path d="M291.8 399.8L307.8 406.5L317.6 403.2L301.6 396.5z" fill="#fff"/><rect x="298.6" y="397.5" width="2" height="3" fill="#000"/><rect x="302.0" y="398.8" width="2" height="3" fill="#000"/><rect x="305.4" y="400.8" width="2" height="3" fill="#000"/><rect x="308.8" y="401.5" width="2" height="3" fill="#000"/><path d="M320.1 411.3L336.1 418.0L345.9 414.7L329.9 408.0z" fill="#fff"/><rect x="326.9" y="408.9" width="2" height="3" fill="#000"/><rect x="330.3" y="411.2" width="2" height="3" fill="#000"/><rect x="333.7" y="411.7" width="2" height="3" fill="#000"/><rect x="337.1" y="413.8" width="2" height="3" fill="#000"/><path d="M395.9 404.2L411.9 410.9L421.8 407.6L405.8 400.9z" fill="#fff"/><rect x="402.7" y="402.1" width="2" height="3" fill="#000"/><rect x="406.1" y="403.4" width="2" height="3" fill="#000"/><rect x="409.5" y="404.6" width="2" height="3" fill="#000"/><rect x="412.9" y="406.9" width="2" height="3" fill="#000"/><path d="M391.4 413.0L407.4 419.7L417.3 416.4L401.3 409.7z" fill="#fff"/><rect x="398.3" y="411.0" width="2" height="3" fill="#000"/><rect x="401.7" y="412.3" width="2" height="3" fill="#000"/><rect x="405.1" y="413.9" width="2" height="3" fill="#000"/><rect x="408.5" y="414.9" width="2" height="3" fill="#000"/><path d="M369.4 406.8L385.4 413.5L395.2 410.2L379.2 403.5z" fill="#fff"/><rect x="376.2" y="404.7" width="2" height="3" fill="#000"/><rect x="379.6" y="406.3" width="2" height="3" fill="#000"/><rect x="383.0" y="408.1" width="2" height="3" fill="#000"/><rect x="386.4" y="409.0" width="2" height="3" fill="#000"/><path d="M367.7 419.2L383.7 425.9L393.6 422.6L377.6 415.9z" fill="#fff"/><rect x="374.5" y="417.1" width="2" height="3" fill="#000"/><rect x="377.9" y="418.8" width="2" height="3" fill="#000"/><rect x="381.3" y="420.2" width="2" height="3" fill="#000"/><rect x="384.7" y="421.0" width="2" height="3" fill="#000"/><path d="M382.7 436.8L398.7 443.5L408.6 440.2L392.6 433.5z" fill="#fff"/><rect x="389.5" y="434.5" width="2" height="3" fill="#000"/><rect x="392.9" y="436.4" width="2" height="3" fill="#000"/><rect x="396.3" y="437.8" width="2" height="3" fill="#000"/><rect x="399.7" y="439.5" width="2" height="3" fill="#000"/><path d="M290.1 424.3L306.1 431.0L315.9 427.7L299.9 421.0z" fill="#fff"/><rect x="296.9" y="421.8" width="2" height="3" fill="#000"/><rect x="300.3" y="423.9" width="2" height="3" fill="#000"/><rect x="303.7" y="425.3" width="2" height="3" fill="#000"/><rect x="307.1" y="427.1" width="2" height="3" fill="#000"/><path d="M206.1 437.7L222.1 444.4L231.9 441.1L215.9 434.4z" fill="#fff"/><rect x="212.9" y="436.2" width="2" height="3" fill="#000"/><rect x="216.3" y="436.5" width="2" height="3" fill="#000"/><rect x="219.7" y="438.8" width="2" height="3" fill="#000"/><rect x="223.1" y="439.5" width="2" height="3" fill="#000"/><path d="M413.6 398.0L429.6 404.7L439.4 401.4L423.4 394.7z" fill="#fff"/><rect x="420.4" y="395.8" width="2" height="3" fill="#000"/><rect x="423.8" y="397.4" width="2" height="3" fill="#000"/><rect x="427.2" y="398.7" width="2" height="3" fill="#000"/><rect x="430.6" y="400.2" width="2" height="3" fill="#000"/><path d="M415.1 450.9L431.1 457.6L440.9 454.3L424.9 447.6z" fill="#fff"/><rect x="421.9" y="448.9" width="2" height="3" fill="#000"/><rect x="425.3" y="450.7" width="2" height="3" fill="#000"/><rect x="428.7" y="452.3" width="2" height="3" fill="#000"/><rect x="432.1" y="452.9" width="2" height="3" fill="#000"/><path d="M397.7 458.9L413.7 465.6L423.6 462.3L407.6 455.6z" fill="#fff"/><rect x="404.5" y="456.5" width="2" height="3" fill="#000"/><rect x="407.9" y="458.5" width="2" height="3" fill="#000"/><rect x="411.3" y="459.5" width="2" height="3" fill="#000"/><rect x="414.7" y="460.8" width="2" height="3" fill="#000"/><path d="M380.1 450.1L396.1 456.8L405.9 453.5L389.9 446.8z" fill="#fff"/><rect x="386.9" y="448.3" width="2" height="3" fill="#000"/><rect x="390.3" y="449.8" width="2" height="3" fill="#000"/><rect x="393.7" y="450.9" width="2" height="3" fill="#000"/><rect x="397.1" y="452.4" width="2" height="3" fill="#000"/><path d="M332.1 451.8L348.1 458.5L357.9 455.2L341.9 448.5z" fill="#fff"/><rect x="338.9" y="450.2" width="2" height="3" fill="#000"/><rect x="342.3" y="451.4" width="2" height="3" fill="#000"/><rect x="345.7" y="452.9" width="2" height="3" fill="#000"/><rect x="349.1" y="454.5" width="2" height="3" fill="#000"/><path d="M419.7 398.9L435.7 405.6L445.6 402.3L429.6 395.6z" fill="#fff"/><rect x="426.5" y="396.5" width="2" height="3" fill="#000"/><rect x="429.9" y="398.5" width="2" height="3" fill="#000"/><rect x="433.3" y="399.9" width="2" height="3" fill="#000"/><rect x="436.7" y="401.1" width="2" height="3" fill="#000"/><path d="M394.1 413.0L410.1 419.7L419.9 416.4L403.9 409.7z" fill="#fff"/><rect x="400.9" y="411.5" width="2" height="3" fill="#000"/><rect x="404.3" y="412.0" width="2" height="3" fill="#000"/><rect x="407.7" y="413.2" width="2" height="3" fill="#000"/><rect x="411.1" y="415.8" width="2" height="3" fill="#000"/><path d="M440.9 422.7L456.9 429.4L466.8 426.1L450.8 419.4z" fill="#fff"/><rect x="447.7" y="421.2" width="2" height="3" fill="#000"/><rect x="451.1" y="422.6" width="2" height="3" fill="#000"/><rect x="454.5" y="424.0" width="2" height="3" fill="#000"/><rect x="457.9" y="424.4" width="2" height="3" fill="#000"/><path d="M462.1 415.7L478.1 422.4L487.9 419.1L471.9 412.4z" fill="#fff"/><rect x="468.9" y="413.9" width="2" height="3" fill="#000"/><rect x="472.3" y="415.5" width="2" height="3" fill="#000"/><rect x="475.7" y="416.1" width="2" height="3" fill="#000"/><rect x="479.1" y="418.5" width="2" height="3" fill="#000"/><path d="M436.4 432.3L452.4 439.0L462.3 435.7L446.3 429.0z" fill="#fff"/><rect x="443.3" y="430.1" width="2" height="3" fill="#000"/><rect x="446.7" y="432.2" width="2" height="3" fill="#000"/><rect x="450.1" y="433.5" width="2" height="3" fill="#000"/><rect x="453.5" y="434.2" width="2" height="3" fill="#000"/><path d="M469.1 434.2L485.1 440.9L494.9 437.6L478.9 430.9z" fill="#fff"/><rect x="475.9" y="432.5" width="2" height="3" fill="#000"/><rect x="479.3" y="433.2" width="2" height="3" fill="#000"/><rect x="482.7" y="434.7" width="2" height="3" fill="#000"/><rect x="486.1" y="436.6" width="2" height="3" fill="#000"/><path d="M461.1 442.1L477.1 448.8L486.9 445.5L470.9 438.8z" fill="#fff"/><rect x="467.9" y="440.2" width="2" height="3" fill="#000"/><rect x="471.3" y="441.7" width="2" height="3" fill="#000"/><rect x="474.7" y="443.5" width="2" height="3" fill="#000"/><rect x="478.1" y="444.0" width="2" height="3" fill="#000"/><path d="M483.1 451.8L499.1 458.5L508.9 455.2L492.9 448.5z" fill="#fff"/><rect x="489.9" y="449.3" width="2" height="3" fill="#000"/><rect x="493.3" y="450.7" width="2" height="3" fill="#000"/><rect x="496.7" y="452.7" width="2" height="3" fill="#000"/><rect x="500.1" y="453.7" width="2" height="3" fill="#000"/><path d="M419.7 452.7L435.7 459.4L445.6 456.1L429.6 449.4z" fill="#fff"/><rect x="426.5" y="450.7" width="2" height="3" fill="#000"/><rect x="429.9" y="451.9" width="2" height="3" fill="#000"/><rect x="433.3" y="453.9" width="2" height="3" fill="#000"/><rect x="436.7" y="454.7" width="2" height="3" fill="#000"/><path d="M397.7 459.8L413.7 466.5L423.6 463.2L407.6 456.5z" fill="#fff"/><rect x="404.5" y="457.8" width="2" height="3" fill="#000"/><rect x="407.9" y="458.9" width="2" height="3" fill="#000"/><rect x="411.3" y="460.1" width="2" height="3" fill="#000"/><rect x="414.7" y="462.2" width="2" height="3" fill="#000"/><path d="M447.9 465.1L463.9 471.8L473.8 468.5L457.8 461.8z" fill="#fff"/><rect x="454.8" y="462.5" width="2" height="3" fill="#000"/><rect x="458.2" y="464.0" width="2" height="3" fill="#000"/><rect x="461.6" y="465.8" width="2" height="3" fill="#000"/><rect x="465.0" y="467.6" width="2" height="3" fill="#000"/><path d="M476.1 475.7L492.1 482.4L501.9 479.1L485.9 472.4z" fill="#fff"/><rect x="482.9" y="473.2" width="2" height="3" fill="#000"/><rect x="486.3" y="474.7" width="2" height="3" fill="#000"/><rect x="489.7" y="476.3" width="2" height="3" fill="#000"/><rect x="493.1" y="478.4" width="2" height="3" fill="#000"/><path d="M538.8 447.3L554.8 454.0L564.8 450.7L548.8 444.0z" fill="#fff"/><rect x="545.7" y="445.3" width="2" height="3" fill="#000"/><rect x="549.1" y="446.8" width="2" height="3" fill="#000"/><rect x="552.5" y="448.5" width="2" height="3" fill="#000"/><rect x="555.9" y="449.3" width="2" height="3" fill="#000"/><path d="M526.4 458.0L542.4 464.7L552.4 461.4L536.4 454.7z" fill="#fff"/><rect x="533.3" y="456.0" width="2" height="3" fill="#000"/><rect x="536.7" y="457.5" width="2" height="3" fill="#000"/><rect x="540.1" y="459.2" width="2" height="3" fill="#000"/><rect x="543.5" y="460.7" width="2" height="3" fill="#000"/><path d="M521.0 467.7L537.0 474.4L547.0 471.1L531.0 464.4z" fill="#fff"/><rect x="527.9" y="465.7" width="2" height="3" fill="#000"/><rect x="531.3" y="467.4" width="2" height="3" fill="#000"/><rect x="534.7" y="468.8" width="2" height="3" fill="#000"/><rect x="538.1" y="470.4" width="2" height="3" fill="#000"/><path d="M554.6 469.5L570.6 476.2L580.6 472.9L564.6 466.2z" fill="#fff"/><rect x="561.5" y="467.3" width="2" height="3" fill="#000"/><rect x="564.9" y="469.5" width="2" height="3" fill="#000"/><rect x="568.3" y="470.9" width="2" height="3" fill="#000"/><rect x="571.7" y="472.2" width="2" height="3" fill="#000"/><path d="M545.8 477.3L561.8 484.0L571.8 480.7L555.8 474.0z" fill="#fff"/><rect x="552.7" y="475.5" width="2" height="3" fill="#000"/><rect x="556.1" y="476.2" width="2" height="3" fill="#000"/><rect x="559.5" y="478.3" width="2" height="3" fill="#000"/><rect x="562.9" y="480.0" width="2" height="3" fill="#000"/><path d="M487.7 495.9L503.7 502.6L513.6 499.3L497.6 492.6z" fill="#fff"/><rect x="494.5" y="494.0" width="2" height="3" fill="#000"/><rect x="497.9" y="495.2" width="2" height="3" fill="#000"/><rect x="501.3" y="497.0" width="2" height="3" fill="#000"/><rect x="504.7" y="497.6" width="2" height="3" fill="#000"/><path d="M522.9 495.1L538.9 501.8L548.9 498.5L532.9 491.8z" fill="#fff"/><rect x="529.8" y="492.7" width="2" height="3" fill="#000"/><rect x="533.2" y="494.3" width="2" height="3" fill="#000"/><rect x="536.6" y="495.5" width="2" height="3" fill="#000"/><rect x="540.0" y="497.2" width="2" height="3" fill="#000"/><path d="M593.5 495.9L609.5 502.6L619.5 499.3L603.5 492.6z" fill="#fff"/><rect x="600.4" y="493.8" width="2" height="3" fill="#000"/><rect x="603.8" y="495.7" width="2" height="3" fill="#000"/><rect x="607.2" y="496.2" width="2" height="3" fill="#000"/><rect x="610.6" y="497.9" width="2" height="3" fill="#000"/><path d="M602.3 506.5L618.3 513.2L628.2 509.9L612.2 503.2z" fill="#fff"/><rect x="609.2" y="504.3" width="2" height="3" fill="#000"/><rect x="612.6" y="505.6" width="2" height="3" fill="#000"/><rect x="616.0" y="506.9" width="2" height="3" fill="#000"/><rect x="619.4" y="509.2" width="2" height="3" fill="#000"/><path d="M552.9 508.3L568.9 515.0L578.9 511.7L562.9 505.0z" fill="#fff"/><rect x="559.8" y="506.4" width="2" height="3" fill="#000"/><rect x="563.2" y="507.1" width="2" height="3" fill="#000"/><rect x="566.6" y="508.8" width="2" height="3" fill="#000"/><rect x="570.0" y="510.2" width="2" height="3" fill="#000"/><path d="M390.6 465.9L406.6 472.6L416.4 469.3L400.4 462.6z" fill="#fff"/><rect x="397.4" y="463.3" width="2" height="3" fill="#000"/><rect x="400.8" y="465.5" width="2" height="3" fill="#000"/><rect x="404.2" y="466.3" width="2" height="3" fill="#000"/><rect x="407.6" y="468.1" width="2" height="3" fill="#000"/><path d="M334.1 362.7L350.1 369.4L359.9 366.1L343.9 359.4z" fill="#fff"/><rect x="340.9" y="360.5" width="2" height="3" fill="#000"/><rect x="344.3" y="362.1" width="2" height="3" fill="#000"/><rect x="347.7" y="363.9" width="2" height="3" fill="#000"/><rect x="351.1" y="364.6" width="2" height="3" fill="#000"/><path d="M527.6 458.9L543.6 465.6L553.6 462.3L537.6 455.6z" fill="#fff"/><rect x="534.5" y="456.6" width="2" height="3" fill="#000"/><rect x="537.9" y="458.3" width="2" height="3" fill="#000"/><rect x="541.3" y="459.2" width="2" height="3" fill="#000"/><rect x="544.7" y="460.9" width="2" height="3" fill="#000"/><path d="M366.9 460.8L400.9 475.1L413.1 471.2L379.1 456.9z" fill="#fff"/><rect x="376.4" y="459.0" width="2" height="3" fill="#000"/><rect x="380.0" y="460.2" width="2" height="3" fill="#000"/><rect x="383.6" y="461.7" width="2" height="3" fill="#000"/><rect x="387.2" y="463.3" width="2" height="3" fill="#000"/><rect x="390.8" y="465.5" width="2" height="3" fill="#000"/><rect x="394.4" y="466.4" width="2" height="3" fill="#000"/><rect x="398.0" y="468.1" width="2" height="3" fill="#000"/><rect x="401.6" y="469.9" width="2" height="3" fill="#000"/><path d="M243.2 479.0L274.0 489.7M284.7 495.0L314.7 505.6M339.4 478.2L367.6 488.0M497.0 430.0L527.0 441.0M528.0 429.0L552.0 438.5M525.0 481.0L556.0 492.0M566.0 483.0L594.0 494.0" stroke="#fff" stroke-width="3.400"/>
<ellipse cx="249" cy="338.5" rx="5.500" ry="2.600" fill="#1414ff" stroke="#f4e61c"/><ellipse cx="309.6" cy="353" rx="5.500" ry="2.600" fill="#1414ff" stroke="#f4e61c"/><ellipse cx="413.2" cy="436.6" rx="5.500" ry="2.600" fill="#1414ff" stroke="#f4e61c"/><ellipse cx="534" cy="509.6" rx="5.500" ry="2.600" fill="#1414ff" stroke="#f4e61c"/><ellipse cx="650.9" cy="505.2" rx="5.500" ry="2.600" fill="#1414ff" stroke="#f4e61c"/><path d="M190 351l12 3.500M204 355.500l11 2.500M250 373.500l13 3.500M265 377.500l10 2M516 431l7-3 4 1.500M595 514l8 6 8 2" stroke="#1414ff" stroke-width="3"/>
<path d="M594 513l10 4-2 4 8 2-3 3-12-5z" fill="#1414ff"/><ellipse cx="109" cy="469.2" rx="10" ry="4" stroke="#fff" shape-rendering="auto"/><path d="M106 470.2l6-2" stroke="#888"/><ellipse cx="194" cy="504.5" rx="10" ry="4" stroke="#fff" shape-rendering="auto"/><path d="M191 505.5l6-2" stroke="#888"/><ellipse cx="279" cy="539.5" rx="10" ry="4" stroke="#fff" shape-rendering="auto"/><path d="M276 540.5l6-2" stroke="#888"/><ellipse cx="640" cy="556.8" rx="10" ry="4" stroke="#fff" shape-rendering="auto"/><path d="M637 557.8l6-2" stroke="#888"/><ellipse cx="736.5" cy="525.9" rx="10" ry="4" stroke="#fff" shape-rendering="auto"/><path d="M733.5 526.9l6-2" stroke="#888"/>
<path d="M231.0 424.0L231.0 444.0M236.0 422.0L236.0 447.0M247.0 420.0L247.0 446.0M252.0 423.0L252.0 450.0M263.0 427.0L263.0 447.0M231.0 424.0L247.0 420.0M236.0 427.0L252.0 423.0M247.0 420.0L263.0 427.0M231.0 444.0L252.0 450.0M236.0 435.0L252.0 431.0M231.0 434.0L247.0 430.0M240.0 426.0L240.0 442.0M243.0 425.0L243.0 445.0M252.0 438.0L263.0 435.0M252.0 450.0L263.0 447.0" stroke="#86e01e"/><path d="M249 437l8-3 3 4 10 3 5 4-9-1-6 3-8-2zM236 448l9 2-3 2z" fill="#86e01e"/>
<path d="M253.0 452.0L275.0 445.0M253.0 452.0L253.0 462.0M253.0 462.0L268.0 470.0M268.0 470.0L281.0 465.0M281.0 465.0L281.0 455.0M275.0 445.0L281.0 455.0M253.0 452.0L268.0 459.0M268.0 459.0L268.0 470.0M268.0 459.0L281.0 455.0M258.0 455.0L272.0 450.0M258.0 460.0L272.0 466.0M262.0 449.0L262.0 466.0M290.0 440.0L330.0 428.0M292.0 445.0L335.0 432.0M300.0 452.0L345.0 440.0" stroke="#3cf8b0"/><path d="M262 452l12-4 4 5-10 5zM283 443l16-5 3 5-14 5zM318 434l22-6 8 3-10 6-14 4zM322 447l14-3 8 4-16 4zM286 459l8-2 4 3-9 2zM256 472l8-2 3 2-8 2zM305 456l10-2 4 2-9 3z" fill="#3cf8b0"/>
<path d="M307.6 439.5L320.6 445.0L328.4 442.5L315.4 437.0z" fill="#fff"/><rect x="313.3" y="437.3" width="2" height="3" fill="#000"/><rect x="317.0" y="439.0" width="2" height="3" fill="#000"/><rect x="320.7" y="441.2" width="2" height="3" fill="#000"/><path d="M323.6 445.5L336.6 451.0L344.4 448.5L331.4 443.0z" fill="#fff"/><rect x="329.3" y="443.3" width="2" height="3" fill="#000"/><rect x="333.0" y="445.2" width="2" height="3" fill="#000"/><rect x="336.7" y="446.4" width="2" height="3" fill="#000"/><path d="M341.6 439.5L354.6 445.0L362.4 442.5L349.4 437.0z" fill="#fff"/><rect x="347.3" y="438.2" width="2" height="3" fill="#000"/><rect x="351.0" y="439.6" width="2" height="3" fill="#000"/><rect x="354.7" y="440.8" width="2" height="3" fill="#000"/><path d="M285.6 450.5L298.6 456.0L306.4 453.5L293.4 448.0z" fill="#fff"/><rect x="291.3" y="448.4" width="2" height="3" fill="#000"/><rect x="295.0" y="450.8" width="2" height="3" fill="#000"/><rect x="298.7" y="452.1" width="2" height="3" fill="#000"/><path d="M334.6 428.5L347.6 434.0L355.4 431.5L342.4 426.0z" fill="#fff"/><rect x="340.3" y="426.7" width="2" height="3" fill="#000"/><rect x="344.0" y="427.9" width="2" height="3" fill="#000"/><rect x="347.7" y="430.0" width="2" height="3" fill="#000"/><path d="M351.6 453.5L364.6 459.0L372.4 456.5L359.4 451.0z" fill="#fff"/><rect x="357.3" y="451.8" width="2" height="3" fill="#000"/><rect x="361.0" y="453.7" width="2" height="3" fill="#000"/><rect x="364.7" y="455.0" width="2" height="3" fill="#000"/><path d="M306 440l12-3.500 5 4-12 4zM336 436l10-3 6 3-10 4zM276 447l9-2.500 3 3-9 3z" fill="#3cf8b0"/><path d="M262 437l20-6M300 430l24-7M326 440l20 8M350 436l22 9" stroke="#fff" stroke-width="3"/><path d="M324.5 226.8L437.5 271.3M323.7 228.6L436.7 273.1M323.0 230.5L436.0 275.0M322.3 232.4L435.3 276.9M321.5 234.2L434.5 278.7M437.6 271.3L593.6 337.3M436.8 273.2L592.8 339.2M436.0 275.0L592.0 341.0M435.2 276.8L591.2 342.8M434.4 278.7L590.4 344.7M437.0 276.3L347.5 304.3M436.3 274.1L346.8 302.1M435.7 271.9L346.2 299.9M435.0 269.7L345.5 297.7M350.5 303.0L350.5 431.0M347.5 303.0L347.5 431.0M344.5 303.0L344.5 431.0M341.5 303.0L341.5 431.0M338.5 303.0L338.5 431.0" stroke="#3cf8b0"/><g stroke="#3cf8b0" stroke-width="1.500" shape-rendering="auto"><ellipse cx="347.6" cy="240.6" rx="3" ry="4.8" transform="rotate(-20 347.6 240.6)"/><ellipse cx="375.9" cy="252.0" rx="3" ry="4.8" transform="rotate(-20 375.9 252.0)"/><ellipse cx="405.0" cy="262.6" rx="3" ry="4.8" transform="rotate(-20 405.0 262.6)"/><ellipse cx="449.0" cy="281.5" rx="3" ry="4.8" transform="rotate(-20 449.0 281.5)"/><ellipse cx="478.0" cy="293.8" rx="3" ry="4.8" transform="rotate(-20 478.0 293.8)"/><ellipse cx="506.5" cy="305.3" rx="3" ry="4.8" transform="rotate(-20 506.5 305.3)"/><ellipse cx="535.6" cy="316.8" rx="3" ry="4.8" transform="rotate(-20 535.6 316.8)"/><ellipse cx="563.0" cy="329.0" rx="3" ry="4.8" transform="rotate(-20 563.0 329.0)"/><ellipse cx="436.0" cy="273.5" rx="5" ry="6" transform="rotate(0 436.0 273.5)"/><ellipse cx="430.0" cy="270.0" rx="5" ry="6" transform="rotate(0 430.0 270.0)"/><ellipse cx="442.0" cy="277.0" rx="5" ry="6" transform="rotate(0 442.0 277.0)"/><ellipse cx="412.0" cy="277.0" rx="3" ry="4.5" transform="rotate(20 412.0 277.0)"/><ellipse cx="388.0" cy="284.7" rx="3" ry="4.5" transform="rotate(20 388.0 284.7)"/><ellipse cx="363.5" cy="293.0" rx="3" ry="4.5" transform="rotate(20 363.5 293.0)"/><ellipse cx="346.0" cy="300.6" rx="6" ry="5" transform="rotate(0 346.0 300.6)"/></g><path d="M319.500 228l5-2 3.500 5.500-5 2.500zM589 337l5-2 4 6-5 2.500z" stroke="#3cf8b0"/><path d="M339 332.9l11 1.500v2.600l-11-1.500z" fill="#3cf8b0"/><path d="M339 362.9l11 1.500v2.600l-11-1.500z" fill="#3cf8b0"/><path d="M339 392.9l11 1.500v2.600l-11-1.500z" fill="#3cf8b0"/><path d="M339 423.5l11 1.500v2.600l-11-1.500z" fill="#3cf8b0"/>
<path d="M304.7 245.7L431.8 298.7M303.9 247.6L431.0 300.6M303.1 249.4L430.2 302.4M302.3 251.3L429.4 304.3M431.7 298.7L560.5 351.9M431.0 300.6L559.8 353.8M430.2 302.4L559.0 355.6M429.5 304.3L558.3 357.5" stroke="#1f55ff"/><g stroke="#1f55ff" stroke-width="1.500" shape-rendering="auto"><ellipse cx="305.0" cy="249.0" rx="2.6" ry="4" transform="rotate(-20 305.0 249.0)"/><ellipse cx="332.6" cy="260.9" rx="2.6" ry="4" transform="rotate(-20 332.6 260.9)"/><ellipse cx="361.8" cy="272.4" rx="2.6" ry="4" transform="rotate(-20 361.8 272.4)"/><ellipse cx="388.2" cy="284.7" rx="2.6" ry="4" transform="rotate(-20 388.2 284.7)"/><ellipse cx="419.0" cy="296.2" rx="2.6" ry="4" transform="rotate(-20 419.0 296.2)"/><ellipse cx="430.6" cy="301.5" rx="2.6" ry="4" transform="rotate(-20 430.6 301.5)"/><ellipse cx="450.9" cy="309.7" rx="2.6" ry="4" transform="rotate(-20 450.9 309.7)"/><ellipse cx="473.0" cy="318.5" rx="2.6" ry="4" transform="rotate(-20 473.0 318.5)"/><ellipse cx="495.0" cy="327.4" rx="2.6" ry="4" transform="rotate(-20 495.0 327.4)"/><ellipse cx="515.3" cy="336.2" rx="2.6" ry="4" transform="rotate(-20 515.3 336.2)"/><ellipse cx="535.6" cy="345.0" rx="2.6" ry="4" transform="rotate(-20 535.6 345.0)"/></g>
<circle cx="567.500" cy="358" r="8" stroke="#f4e61c" stroke-width="1.600" shape-rendering="auto"/><path d="M568 350v8" stroke="#f4e61c" stroke-width="2"/><path d="M558.9 348.5L576.9 358.5M557.0 352.0L575.0 362.0M555.1 355.5L573.1 365.5M577.7 359.1L592.7 373.1M575.0 362.0L590.0 376.0M572.3 364.9L587.3 378.9M575.0 358.0L595.0 366.0M578.0 372.0L598.0 378.0M583.0 363.0L588.0 377.0M590.0 366.0L580.0 374.0M596.0 370.0L586.0 380.0" stroke="#1f55ff"/><g stroke="#1f55ff" shape-rendering="auto"><ellipse cx="560.0" cy="353.0" rx="3.5" ry="4" transform="rotate(0 560.0 353.0)"/><ellipse cx="576.0" cy="364.0" rx="3.5" ry="4" transform="rotate(0 576.0 364.0)"/><ellipse cx="585.0" cy="372.0" rx="3.5" ry="4" transform="rotate(0 585.0 372.0)"/><ellipse cx="593.0" cy="376.0" rx="3.5" ry="4" transform="rotate(0 593.0 376.0)"/></g><circle cx="562" cy="353" r="4" fill="#1f55ff"/><circle cx="576.500" cy="362" r="4" fill="#1f55ff"/><path d="M566 362l6 3-1 4z" fill="#999"/>
<path d="M227.1 235.1L293.6 214.1M227.5 236.3L294.0 215.3M227.8 237.4L294.3 216.4M228.2 238.6L294.7 217.6M228.5 239.7L295.0 218.7M228.9 240.9L295.4 219.9M299.8 219.0L299.8 243.0M297.9 219.0L297.9 243.0M296.1 219.0L296.1 243.0M294.2 219.0L294.2 243.0M229.5 234.8L547.5 366.8M228.8 236.7L546.8 368.7M228.0 238.5L546.0 370.5M227.2 240.3L545.2 372.3M226.5 242.2L544.5 374.2M550.8 371.0L550.8 395.5M548.9 371.0L548.9 395.5M547.1 371.0L547.1 395.5M545.2 371.0L545.2 395.5M398.4 314.8L381.4 320.3M397.0 310.5L380.0 316.0M395.6 306.2L378.6 311.7M382.0 322.0L382.0 418.0M378.8 322.0L378.8 418.0M375.5 322.0L375.5 418.0M372.2 322.0L372.2 418.0M369.0 322.0L369.0 418.0M374.5 417.5L311.0 438.8M373.5 414.7L310.0 436.0M372.5 411.9L309.0 433.2" stroke="#ff1848"/><g stroke="#ff1848" stroke-width="1.500" shape-rendering="auto"><ellipse cx="252.4" cy="249.4" rx="3" ry="4.8" transform="rotate(-20 252.4 249.4)"/><ellipse cx="280.6" cy="260.9" rx="3" ry="4.8" transform="rotate(-20 280.6 260.9)"/><ellipse cx="308.8" cy="273.2" rx="3" ry="4.8" transform="rotate(-20 308.8 273.2)"/><ellipse cx="337.0" cy="285.6" rx="3" ry="4.8" transform="rotate(-20 337.0 285.6)"/><ellipse cx="405.9" cy="313.5" rx="3" ry="4.8" transform="rotate(-20 405.9 313.5)"/><ellipse cx="434.0" cy="325.3" rx="3" ry="4.8" transform="rotate(-20 434.0 325.3)"/><ellipse cx="463.2" cy="337.0" rx="3" ry="4.8" transform="rotate(-20 463.2 337.0)"/><ellipse cx="491.5" cy="349.4" rx="3" ry="4.8" transform="rotate(-20 491.5 349.4)"/><ellipse cx="520.6" cy="360.9" rx="3" ry="4.8" transform="rotate(-20 520.6 360.9)"/><ellipse cx="230.0" cy="238.0" rx="4.5" ry="4.5" transform="rotate(0 230.0 238.0)"/><ellipse cx="294.5" cy="217.0" rx="4.5" ry="4.5" transform="rotate(0 294.5 217.0)"/><ellipse cx="546.0" cy="369.0" rx="4.5" ry="4.5" transform="rotate(0 546.0 369.0)"/><ellipse cx="396.0" cy="310.0" rx="4.5" ry="4.5" transform="rotate(0 396.0 310.0)"/><ellipse cx="376.5" cy="318.0" rx="7" ry="5" transform="rotate(0 376.5 318.0)"/></g><ellipse cx="229.500" cy="238" rx="4" ry="4" fill="#ff1848"/><ellipse cx="294.500" cy="216.500" rx="3.500" ry="3" fill="#ff1848"/><path d="M364.0 358.0L364.0 380.0M384.0 357.0L384.0 381.0M364.0 358.0L374.0 352.5M374.0 352.5L384.0 357.0M364.0 380.0L374.0 386.5M374.0 386.5L384.0 381.0M364.0 358.0L374.0 363.0M374.0 363.0L384.0 357.0M374.0 363.0L374.0 386.5M364.0 380.0L374.0 375.0M374.0 375.0L384.0 381.0M366.0 369.0L382.0 369.0M368.0 408.0L368.0 420.0M383.0 407.0L383.0 419.0M368.0 420.0L376.0 424.0M376.0 424.0L383.0 419.0M368.0 408.0L376.0 412.0M376.0 412.0L383.0 407.0" stroke="#ff1848"/><g stroke="#ff1848" shape-rendering="auto"><circle cx="301.500" cy="443.800" r="10"/><ellipse cx="301.500" cy="443.800" rx="5" ry="10"/><path d="M291.500 443.800h20M296 435l11 17M307 435l-11 17"/><ellipse cx="318" cy="436" rx="4" ry="6"/></g><path d="M318 470l6-2 3 2-6 2zM303 476l5-1.500 3 2-5 1.500zM388 452l8-2 4 3-8 2zM362 450l10-2.500 4 3-10 2.500z" fill="#ff1848"/>
<path d="M236.6 244.7L248.6 249.8L248.6 255.3L236.6 250.2zM288.7 265.3L300.7 270.4L300.7 275.9L288.7 270.8zM317.0 276.7L329.0 281.8L329.0 287.3L317.0 282.2zM373.4 300.6L385.4 305.7L385.4 311.2L373.4 306.1zM414.9 318.2L426.9 323.3L426.9 328.8L414.9 323.7zM443.0 329.7L455.0 334.8L455.0 340.3L443.0 335.2zM471.4 341.1L483.4 346.2L483.4 351.7L471.4 346.6zM520.8 361.7L532.8 366.8L532.8 372.3L520.8 367.2zM311.6 252.1L323.6 257.2L323.6 262.7L311.6 257.6zM368.0 275.0L380.0 280.1L380.0 285.6L368.0 280.5zM435.0 302.3L447.0 307.4L447.0 312.9L435.0 307.8zM433.4 301.7L445.4 306.8L445.4 312.3L433.4 307.2zM476.6 320.3L488.6 325.4L488.6 330.9L476.6 325.8zM520.0 337.9L532.0 343.0L532.0 348.5L520.0 343.4zM330.0 233.7L342.0 238.8L342.0 244.3L330.0 239.2zM355.8 244.7L367.8 249.8L367.8 255.3L355.8 250.2zM413.0 267.7L425.0 272.8L425.0 278.3L413.0 273.2zM457.0 285.7L469.0 290.8L469.0 296.3L457.0 291.2zM485.5 297.3L497.5 302.4L497.5 307.9L485.5 302.8zM542.8 321.2L554.8 326.3L554.8 331.8L542.8 326.7zM571.0 332.7L583.0 337.8L583.0 343.3L571.0 338.2z" fill="#1414ff"/>
<rect x="291" y="243" width="11.500" height="9" fill="#fff"/><rect x="293.5" y="246" width="2.500" height="3" fill="#000"/><rect x="298" y="246" width="2.500" height="3" fill="#000"/><path d="M293 252l-3 4M300.5 252l3 4" stroke="#ff1848"/><rect x="539.5" y="395.5" width="11.500" height="9" fill="#fff"/><rect x="542.0" y="398.5" width="2.500" height="3" fill="#000"/><rect x="546.5" y="398.5" width="2.500" height="3" fill="#000"/><path d="M541.5 404.5l-3 4M549.0 404.5l3 4" stroke="#ff1848"/>
<g stroke="#fff" shape-rendering="auto" stroke-width="1.100"><path d="M83.200 544.700V499M83.200 544.700L51 531.500M83.200 544.700L45.800 556M80 544.700l3.200-2.200 4.500 2.200-4 2.400z"/><path d="M88 484.500h12.500l-12.500 12.200h12.500"/><path d="M55.500 517.400l12.400 12.300M67.900 517.400l-12.400 12.300"/><path d="M47.200 539l6.400 6.400 6.400-6.400M53.600 545.400v6.400"/></g>
</svg>
<!-- ===== viewcube + nav bar ===== -->
<svg style="left:1030px;top:200px" width="95" height="105" viewBox="1030 200 95 105"><defs><linearGradient id="cbL" x1="0" y1="0" x2="0" y2="1"><stop offset="0" stop-color="#dedede"/><stop offset="1" stop-color="#b4b4b4"/></linearGradient><linearGradient id="cbR" x1="0" y1="0" x2="0" y2="1"><stop offset="0" stop-color="#d0d0d0"/><stop offset="1" stop-color="#a8a8a8"/></linearGradient></defs><ellipse cx="1077" cy="248" rx="32.700" ry="11.200" fill="none" stroke="#474747" stroke-width="8"/><ellipse cx="1077" cy="247" rx="22" ry="7" fill="#050505"/><path d="M1058 217l19.300-4.800 18.700 5.800-20.400 5.600z" fill="#e6e6e6"/><path d="M1058 217l17.600 6.600v26.400l-16.900-8.500z" fill="url(#cbL)"/><path d="M1096 218l-20.400 5.600v26.400l20.400-7.700z" fill="url(#cbR)"/><path d="M1075.600 223.600v26.400M1058 217l17.600 6.600 20.400-5.600" stroke="#333" stroke-width="1" stroke-dasharray="3 2" fill="none"/><text transform="translate(1061.500 236.500) skewY(22)" font-size="6.500" fill="#444" font-family="Liberation Sans,sans-serif" font-weight="bold" textLength="11">BACK</text><text transform="translate(1080.500 239.500) skewY(-20)" font-size="6.500" fill="#444" font-family="Liberation Sans,sans-serif" font-weight="bold" textLength="12">LEFT</text><text transform="translate(1073 219.500) skewX(-30) scale(1 .5)" font-size="6" fill="#555" font-family="Liberation Sans,sans-serif" font-weight="bold">TOP</text><text transform="translate(1043 258) rotate(20) skewX(-25)" font-size="9.500" fill="#e8e8e8" font-family="Liberation Sans,sans-serif" font-weight="bold">N</text><text transform="translate(1096 254.500) rotate(-158) skewX(20) translate(-9 0)" font-size="9.500" fill="#e8e8e8" font-family="Liberation Sans,sans-serif" font-weight="bold">W</text><text transform="translate(1052 238) scale(1 .5)" font-size="7" fill="#ccc" font-family="Liberation Sans,sans-serif" font-weight="bold">S</text><text transform="translate(1096.500 238) scale(1 .5)" font-size="7" fill="#ccc" font-family="Liberation Sans,sans-serif" font-weight="bold">E</text><rect x="1053" y="280.500" width="48" height="17.500" rx="3.500" fill="#c6c6d6" stroke="#8a8a9a" stroke-width=".8"/><text x="1058" y="293.300" font-size="11.500" fill="#6c6c7c" font-family="Liberation Sans,sans-serif" textLength="23">WCS</text><path d="M1086.500 285.500h8.500l-4.250 5.500z" fill="none" stroke="#777787" stroke-width=".9"/></svg>
<svg style="left:1089px;top:323px" width="33" height="212" viewBox="0 0 33 212" fill="none" stroke="#484848" stroke-width="1.200"><rect x=".5" y=".5" width="31.500" height="211" rx="4" fill="#6e6e6e" stroke="none"/><circle cx="26.500" cy="6" r="3" stroke="#555" stroke-width="1"/><path d="M24.700 4.200l3.600 3.600M28.300 4.200l-3.600 3.600" stroke-width=".8"/><path d="M16 19h7q3.500 0 3.500 3.500v7a10.500 10.500 0 1 1-10.500-10.500z"/><circle cx="16" cy="29.500" r="6"/><path d="M11.800 33.800l-3.300 3.300M20.200 33.800l3.300 3.300"/><path d="M13.500 48h5.500l-2.750 3z" fill="#484848" stroke="none"/><path d="M3 56.500h26" stroke="#5e5e5e"/><path d="M12.500 82c-2-2-4.500-5-6-7 1-1.800 3-1.200 4.500.600l1.800 2v-9c0-1.800 2.500-1.800 2.500 0v-1.800c0-1.800 2.700-1.800 2.700 0v1.500c0-1.800 2.700-1.800 2.700 0v2c0-1.600 2.400-1.600 2.400 0v9.500c0 3.500-1.800 5.500-3.200 6.500h-7c-1.400-1-2-2.500-2.400-4.300z"/><path d="M5 91l11 11M17 91l-11 11M4.500 95v-4.500h4.500M17.500 95v-4.500h-4.500M4.500 98v4.500h4.500"/><circle cx="20" cy="104" r="4.500"/><path d="M23.500 107.500l4.500 4.500" stroke-width="2.200"/><path d="M13.500 119h5.500l-2.750 3z" fill="#484848" stroke="none"/><path d="M16 128l4.500 5.500h-2.500v14h-4v-14h-2.500z"/><path d="M12 139c-5 .5-8 2-8 3.500 0 2.200 5 4 12 4s12-1.800 12-4c0-1.500-3-3-8-3.500"/><path d="M8.500 143l-4 2 4 3z" fill="#484848"/><path d="M13.500 157h5.500l-2.750 3z" fill="#484848" stroke="none"/><path d="M3 164.500h26" stroke="#5e5e5e"/><rect x="5.500" y="170.500" width="5.500" height="5.500"/><rect x="13.500" y="170.500" width="5.500" height="5.500"/><rect x="21.500" y="170.500" width="5.500" height="5.500"/><rect x="5.500" y="179.500" width="16" height="13"/><path d="M10.500 182v8l7-4z" fill="#484848" stroke="none"/><circle cx="26.500" cy="205.500" r="2.800" stroke="#555" stroke-width="1"/><path d="M24.500 205.500h4" stroke-width="1"/></svg>
<svg style="left:1089px;top:455px" width="36" height="22" viewBox="1089 455 36 22" shape-rendering="crispEdges"><path d="M1089 459.900L1124 474.500" stroke="#c83c3c" stroke-width="1"/></svg>
<!-- ===== taskbar ===== -->
<div class="a" style="left:0px;top:728px;width:1360px;height:40px;background:linear-gradient(#1e1e1e,#161616 50%,#111);border-top:1px solid #5c5c5c"></div>
<svg style="left:6px;top:729px;" width="42" height="39" viewBox="0 0 42 39"><defs><radialGradient id="orb" cx=".5" cy=".35" r=".7"><stop offset="0" stop-color="#7ac4f0"/><stop offset=".55" stop-color="#2a78c8"/><stop offset="1" stop-color="#0c2c6c"/></radialGradient></defs>
<circle cx="21" cy="19.500" r="19" fill="url(#orb)" stroke="#5aa0d8" stroke-width="1"/>
<path d="M12.500 11.500q4-2.500 8-.5l-1.200 7.500q-4-1.800-8 .5z" fill="#f0642a"/><path d="M22 11.500q4 2 8.500-.5l-1.200 7.500q-4.500 2.500-8.500.5z" fill="#8cc43c"/><path d="M11 20.500q4-2.300 8-.5l-1.200 7.500q-4-1.800-8 .5z" fill="#3c9ae8"/><path d="M20.500 20.500q4 2 8.500-.5l-1.200 7.500q-4.500 2.500-8.500.5z" fill="#f8c62a"/></svg>
<svg style="left:70px;top:731px;" width="38" height="34" viewBox="0 0 38 34"><defs><radialGradient id="ie" cx=".4" cy=".35" r=".8"><stop offset="0" stop-color="#7cd0ff"/><stop offset=".6" stop-color="#1e78d8"/><stop offset="1" stop-color="#0a3c98"/></radialGradient></defs>
<circle cx="19" cy="18" r="11.500" fill="url(#ie)"/><circle cx="19" cy="18" r="5" fill="#161616"/><rect x="13" y="16.500" width="18" height="3.400" fill="#161616"/><path d="M24 21h7q-1 4-5 6z" fill="#161616"/>
<path d="M5 28q-5-9 12-20q10-6 15-4-4-1-12 4q-14 10-10 18q1 2 4 1-5 4-9 1z" fill="#f4c018"/></svg>
<div class="a" style="left:170px;top:730px;width:5px;height:38px;border:1px solid #8a8a8a;border-left:none;border-radius:0 3px 3px 0;background:#2a2a2a"></div>
<div class="a" style="left:120px;top:730px;width:51px;height:38px;border:1px solid #9a9a9a;border-radius:3px;background:linear-gradient(160deg,#5a5a5a 0,#3c3c3c 45%,#1c1c1c 50%,#202020 100%);box-shadow:inset 0 0 0 1px #2a2a2a"></div>
<svg style="left:128px;top:733px;" width="36" height="31" viewBox="0 0 36 31"><path d="M2 6h10l2 3h19v20h-31z" fill="#e8c458"/><rect x="4" y="3" width="9" height="4" fill="#fff"/><rect x="5" y="2" width="4" height="3" fill="#2ca02c"/><rect x="13" y="5" width="9" height="4" fill="#fff"/><rect x="13.500" y="4" width="3" height="3" fill="#d03020"/><rect x="21" y="7" width="9" height="4" fill="#fff"/><rect x="21.500" y="6" width="3" height="3" fill="#2a7ad8"/>
<path d="M2 12h31v17h-31z" fill="#f6dc8a"/><path d="M7 17h20l2 12h-6v-6h-12v6h-6z" fill="#8cc8f0" stroke="#5aa0d0" stroke-width=".6"/></svg>
<svg style="left:193px;top:735px;" width="30" height="28" viewBox="0 0 30 28"><rect x="3" y="2" width="24" height="24" rx="2" fill="#6aa8d8"/><rect x="1" y="3" width="22" height="23" rx="2" fill="#9ccaee"/><circle cx="12" cy="14" r="8.500" fill="#f07818" stroke="#f8c088" stroke-width="1"/><path d="M9 9v10l8.500-5z" fill="#fff"/></svg>
<div class="a" style="left:240px;top:730px;width:56px;height:38px;border:1px solid #9a9a9a;border-radius:3px;background:linear-gradient(160deg,#5a5a5a 0,#3c3c3c 45%,#1c1c1c 50%,#202020 100%);box-shadow:inset 0 0 0 1px #2a2a2a"></div>
<svg style="left:252px;top:732px;" width="32" height="32" viewBox="0 0 32 32"><defs><radialGradient id="ffb" cx=".5" cy=".3" r=".7"><stop offset="0" stop-color="#8cd4f8"/><stop offset="1" stop-color="#1a50b0"/></radialGradient></defs>
<circle cx="17" cy="14" r="11" fill="url(#ffb)"/><path d="M3 10q-3 10 4 17q7 6 16 2q8-5 7-15q-2 8-9 9q-7 0-8-6q3 2 5-1q-4-1-3-5q-4-1-5-6q-4 1-7 5z" fill="#f07814"/><path d="M3 10q0 6 4 9q-2-6 3-9q-4-3-7 0z" fill="#f8b02a"/><path d="M25 6q6 5 5 12q-2-4-4-4q1-4-1-8z" fill="#e8581a"/></svg>
<svg style="left:313px;top:732px;" width="31" height="31" viewBox="0 0 31 31"><rect x="0" y="5" width="30" height="25" fill="#d8d8d8"/><rect x="14" y="6" width="15" height="16" fill="#8a8a8a"/><circle cx="22" cy="14" r="6" fill="#666" stroke="#bbb" stroke-width="1"/><rect x="0" y="22" width="30" height="8" fill="#f4f4f4"/>
<path d="M2 2h12l-1 3h-3l3 16 4 1-1 3h-12l1-3h3l-3-16-4-1z" fill="#f0b418" stroke="#a87808" stroke-width=".5"/></svg>
<div class="a" style="left:335.5px;top:752px;font-size:9px;line-height:12px;color:#111;letter-spacing:0.00px;white-space:pre;font-weight:bold;">F</div>
<svg style="left:373px;top:732px;" width="31" height="31" viewBox="0 0 31 31"><path d="M6 8l24-4v18l-24 6z" fill="#c4c4c4"/><path d="M10 9l18-3v6l-18 5z" fill="#e8e8e8"/><rect x="0" y="22" width="30" height="8" fill="#1a1a1a"/>
<path d="M4 3l10-2q7 0 7 6q0 4-4 6l6 9-6 1.500-5-9-1 .3 1 9-5 1.500z" fill="#e070d8" stroke="#a030a0" stroke-width=".5"/><path d="M11 5l3-.5q2 .3 2 2.500q0 2-3 3z" fill="#7a2a7a"/></svg>
<div class="a" style="left:388.0px;top:754px;font-size:7.6px;line-height:10px;color:#fff;letter-spacing:-0.49px;white-space:pre;font-weight:bold;">MEP</div>
<svg style="left:432px;top:732px;" width="33" height="32" viewBox="0 0 33 32"><defs><linearGradient id="ar432" x1="0" y1="0" x2="1" y2="1"><stop offset="0" stop-color="#1e2f4e"/><stop offset=".5" stop-color="#5a7092"/><stop offset="1" stop-color="#1a2840"/></linearGradient></defs>
<rect width="33" height="32" fill="url(#ar432)"/><path d="M3 32q6-26 16-27q7 0 10 27h-5q-2-20-6-20q-6 2-11 20z" fill="#10203a"/><path d="M3 32q6-26 16-27" fill="none" stroke="#b8c8dc" stroke-width="1.600"/><path d="M19 4q7 0 10 27" fill="none" stroke="#8094b4" stroke-width="1"/></svg>
<div class="a" style="left:531px;top:730px;width:5px;height:38px;border:1px solid #8a8a8a;border-left:none;border-radius:0 3px 3px 0;background:#2a2a2a"></div>
<div class="a" style="left:480px;top:730px;width:52px;height:38px;border:1px solid #9a9a9a;border-radius:3px;background:linear-gradient(160deg,#5a5a5a 0,#3c3c3c 45%,#1c1c1c 50%,#202020 100%);box-shadow:inset 0 0 0 1px #2a2a2a"></div>
<svg style="left:490px;top:733px;" width="32" height="30" viewBox="0 0 32 30"><defs><linearGradient id="ai490" x1="0" y1="0" x2="1" y2="1"><stop offset="0" stop-color="#f2f2f2"/><stop offset=".5" stop-color="#8a8a8a"/><stop offset="1" stop-color="#d8d8d8"/></linearGradient></defs>
<rect x="0" y="5" width="31" height="24" fill="url(#ai490)"/><rect x="0" y="22" width="31" height="7" fill="#1a1a1a"/>
<path d="M3 22l7-22h4l12 17-4 3-4-5-6 1.500-1 5z" fill="#e8141c"/><path d="M10 0l-3.500 11 8.500-4z" fill="#f87a7a"/><path d="M12.500 9l3.500 5-5 1z" fill="#7a0a0e"/></svg>
<div class="a" style="left:504.0px;top:753px;font-size:7.6px;line-height:10px;color:#fff;letter-spacing:-0.49px;white-space:pre;font-weight:bold;">MEP</div>
<svg style="left:552px;top:733px;" width="32" height="30" viewBox="0 0 32 30"><defs><linearGradient id="ai552" x1="0" y1="0" x2="1" y2="1"><stop offset="0" stop-color="#f2f2f2"/><stop offset=".5" stop-color="#8a8a8a"/><stop offset="1" stop-color="#d8d8d8"/></linearGradient></defs>
<rect x="0" y="5" width="31" height="24" fill="url(#ai552)"/><rect x="0" y="22" width="31" height="7" fill="#1a1a1a"/>
<path d="M3 22l7-22h4l12 17-4 3-4-5-6 1.500-1 5z" fill="#e8141c"/><path d="M10 0l-3.500 11 8.500-4z" fill="#f87a7a"/><path d="M12.500 9l3.500 5-5 1z" fill="#7a0a0e"/></svg>
<div class="a" style="left:570px;top:755px;width:13px;height:7px;background:#fff"></div>
<svg style="left:612px;top:731px;" width="32" height="34" viewBox="0 0 32 34"><path d="M10 2l5 6M22 2l-5 6" stroke="#2a2a2a" stroke-width="1.500"/><ellipse cx="16" cy="20" rx="13" ry="12" fill="#d81820" stroke="#7a0a10" stroke-width="1"/><path d="M4 18q12-9 24 0q-2-9-12-9t-12 9z" fill="#444"/><path d="M13 13h6v6h4l-7 7-7-7h4z" fill="#fff"/></svg>
<div class="a" style="left:660px;top:730px;width:56px;height:38px;border:1px solid #9a9a9a;border-radius:3px;background:linear-gradient(160deg,#5a5a5a 0,#3c3c3c 45%,#1c1c1c 50%,#202020 100%);box-shadow:inset 0 0 0 1px #2a2a2a"></div>
<svg style="left:672px;top:732px;" width="32" height="32" viewBox="0 0 32 32"><circle cx="11" cy="10" r="8" fill="#18a8e8"/><circle cx="21" cy="22" r="8" fill="#18a8e8"/><circle cx="16" cy="16" r="12.500" fill="#1cb0f0"/><text x="16" y="24" font-size="22" font-weight="bold" fill="#fff" text-anchor="middle" font-family="Liberation Sans,sans-serif">S</text></svg>
<div class="a" style="left:720px;top:730px;width:56px;height:38px;border:1px solid #9a9a9a;border-radius:3px;background:linear-gradient(160deg,#5a5a5a 0,#3c3c3c 45%,#1c1c1c 50%,#202020 100%);box-shadow:inset 0 0 0 1px #2a2a2a"></div>
<svg style="left:734px;top:734px;" width="29" height="28" viewBox="0 0 29 28"><rect width="28" height="28" fill="#f4f4f4"/><path d="M14 0h10l-6 28h-8q6-12 4-28z" fill="#e02020"/><path d="M0 10q12-4 18-10h6q-8 10-24 14zM0 20q6-2 10 2l3 6h-6l-3-5-4 2z" fill="#e84040"/><path d="M20 14q4 2 8 8v6q-4-8-10-10z" fill="#c81818"/><path d="M0 12q10-2 14-8M4 24q6 0 10-6" stroke="#bbb" stroke-width="1.500" fill="none"/></svg>
<div class="a" style="left:780px;top:730px;width:56px;height:38px;border:1px solid #9a9a9a;border-radius:3px;background:linear-gradient(160deg,#5a5a5a 0,#3c3c3c 45%,#1c1c1c 50%,#202020 100%);box-shadow:inset 0 0 0 1px #2a2a2a"></div>
<svg style="left:791px;top:731px;" width="36" height="34" viewBox="0 0 36 34"><path d="M3 22q0-10 13-12q12-1 13 8q0 8-9 9q-4 0-4-3q0-3-4-3q-3 0-4 3q-5 1-5-2z" fill="#a8d4ec" stroke="#5a90b8" stroke-width=".8"/><circle cx="9" cy="20" r="2.200" fill="#d83030"/><circle cx="13" cy="15" r="2.200" fill="#38a838"/><circle cx="20" cy="13" r="2.400" fill="#e8c020"/><circle cx="17" cy="22" r="1.800" fill="#203870"/>
<path d="M29 6l3 1.500-11 24-2 1 .5-3z" fill="#e89828" stroke="#a86010" stroke-width=".5"/><path d="M27 2l6-1 1 6-3 1-3-1.500z" fill="#e8d0a0"/></svg>
<div class="a" style="left:840px;top:730px;width:56px;height:38px;border:1px solid #9a9a9a;border-radius:3px;background:linear-gradient(160deg,#5a5a5a 0,#3c3c3c 45%,#1c1c1c 50%,#202020 100%);box-shadow:inset 0 0 0 1px #2a2a2a"></div>
<svg style="left:853px;top:733px;" width="31" height="31" viewBox="0 0 31 31"><defs><linearGradient id="ar853" x1="0" y1="0" x2="1" y2="1"><stop offset="0" stop-color="#1e2f4e"/><stop offset=".5" stop-color="#5a7092"/><stop offset="1" stop-color="#1a2840"/></linearGradient></defs>
<rect width="31" height="31" fill="url(#ar853)"/><path d="M3 31q6-26 16-27q7 0 10 27h-5q-2-20-6-20q-6 2-11 20z" fill="#10203a"/><path d="M3 31q6-26 16-27" fill="none" stroke="#b8c8dc" stroke-width="1.600"/><path d="M19 4q7 0 10 27" fill="none" stroke="#8094b4" stroke-width="1"/></svg>
<div class="a" style="left:909.4px;top:739px;font-size:11.5px;line-height:15px;color:#fff;letter-spacing:-1.16px;white-space:pre;">BG</div>
<svg style="left:931px;top:738px;" width="17" height="15" viewBox="0 0 17 15"><path d="M6 3q3-3 6 0" stroke="#ccc" fill="none" stroke-width="1"/><rect x=".5" y="4.500" width="15.500" height="9.500" rx="1.500" fill="#e4e4e4" stroke="#999" stroke-width=".6"/><path d="M2.500 7h11.500M2.500 9.500h11.500" stroke="#666" stroke-width="1.200" stroke-dasharray="1.500 1"/><path d="M4.500 12h7.500" stroke="#666" stroke-width="1.200"/></svg>
<svg style="left:958px;top:740px;" width="17" height="17" viewBox="0 0 17 17"><rect x="1" y="2" width="7" height="11" fill="#bbb" stroke="#888" stroke-width=".6"/><rect x="6" y="1" width="7" height="11" fill="#d8d8d8" stroke="#888" stroke-width=".6"/><rect x="9" y="9" width="6.500" height="6.500" fill="#e81818"/></svg>
<svg style="left:982px;top:740px;" width="18" height="17" viewBox="0 0 18 17"><path d="M1 5l8-4 8 3v9l-8 4-8-3z" fill="#d81820"/><path d="M1 5l8 3 8-4" stroke="#f88" stroke-width=".8" fill="none"/><text x="9" y="14" font-size="9" font-weight="bold" fill="#fff" text-anchor="middle" font-family="Liberation Sans,sans-serif">SW</text></svg>
<svg style="left:1006px;top:740px;" width="18" height="17" viewBox="0 0 18 17"><path d="M3 4q6-5 12 0q3 5-2 10q-6 3-10-2q-3-4 0-8z" fill="#d0d0d0" stroke="#f4f4f4" stroke-width="1"/><path d="M6 6l6 6M12 6l-6 6" stroke="#fff" stroke-width="2.400"/></svg>
<svg style="left:1030px;top:740px;" width="17" height="17" viewBox="0 0 17 17"><circle cx="8.500" cy="8.500" r="7.500" fill="#1c60d8" stroke="#e8f0ff" stroke-width="1.400"/><path d="M10 3l-5 6.500h3.500l-2 5 5.500-7h-3.500z" fill="#fff"/></svg>
<svg style="left:1053px;top:739px;" width="19" height="19" viewBox="0 0 19 19"><path d="M9.500 1l8.500 8.500-8.500 8.500-8.500-8.500z" fill="#f0a020" stroke="#a86808" stroke-width=".8"/><path d="M12 3l-7 7h4l-3 6 8-8h-4z" fill="#fff6d0" stroke="#7a4a08" stroke-width=".5"/></svg>
<svg style="left:1079px;top:740px;" width="17" height="18" viewBox="0 0 17 18"><rect x="1" y="1" width="14" height="11" fill="#1a4a9c" stroke="#88a8d8" stroke-width=".6"/><path d="M3 10v-4M6 10v-7M9 10v-5M12 10v-3" stroke="#cfe0ff" stroke-width="1.400"/><path d="M5 14h7M8.500 12v2M4 16h9" stroke="#aaa" stroke-width="1"/></svg>
<svg style="left:1103px;top:740px;" width="17" height="17" viewBox="0 0 17 17"><rect x="2" y="1" width="13" height="10" fill="#9a9a9a"/><path d="M1 14h6M10 14h6" stroke="#bbb" stroke-width="2.400"/><path d="M4 11v2M13 11v2" stroke="#999" stroke-width="1"/></svg>
<svg style="left:1128px;top:739px;" width="15" height="19" viewBox="0 0 15 19"><ellipse cx="7.500" cy="9.500" rx="6.500" ry="9" fill="#1c78d0"/><path d="M4 6l7 6-3.500 3.500v-12l3.500 3.500-7 6" stroke="#fff" stroke-width="1.400" fill="none"/></svg>
<svg style="left:1150px;top:739px;" width="18" height="19" viewBox="0 0 18 19"><path d="M2 4q0-2 2-2h11q2 0 2 2v11q0 2-2 2h-13z" fill="#e02828"/><circle cx="9.500" cy="9.500" r="5.500" fill="#fff"/><circle cx="9.500" cy="9.500" r="3.500" fill="#e02828"/><circle cx="9.500" cy="9.500" r="1.500" fill="#f8d020"/></svg>
<svg style="left:1174px;top:740px;" width="18" height="18" viewBox="0 0 18 18"><path d="M2.500 1v16" stroke="#ddd" stroke-width="1.600"/><path d="M3.500 2q4-1.500 6 0t5 0v7q-3 1.500-5 0t-6 0z" fill="#f4f4f4"/><circle cx="12.500" cy="12.500" r="4.500" fill="#e02828"/><path d="M10.500 10.500l4 4M14.500 10.500l-4 4" stroke="#fff" stroke-width="1.400"/></svg>
<svg style="left:1201px;top:740px;" width="13" height="18" viewBox="0 0 13 18"><rect x="4" y=".5" width="5" height="2" fill="#eee"/><rect x="1.500" y="2.500" width="10" height="14" rx="1.500" fill="none" stroke="#f4f4f4" stroke-width="1.600"/><rect x="3.500" y="11.500" width="6" height="3" fill="#f4f4f4"/></svg>
<svg style="left:1223px;top:741px;" width="18" height="15" viewBox="0 0 18 15"><rect x="1" y="11" width="2" height="2.500" fill="#fff"/><rect x="4.500" y="9" width="2.200" height="4.500" fill="#fff"/><rect x="8" y="6.500" width="2.200" height="7" fill="#fff"/><rect x="11.500" y="3.500" width="2.200" height="10" fill="#fff"/><rect x="15" y="1" width="2.200" height="12.500" fill="#fff"/></svg>
<svg style="left:1246px;top:740px;" width="18" height="18" viewBox="0 0 18 18"><path d="M1.500 6h3l4.500-4.500v14l-4.500-4.500h-3z" fill="#f4f4f4"/><circle cx="12.500" cy="12" r="4.500" fill="#e02828"/><circle cx="12.500" cy="12" r="2.600" fill="none" stroke="#fff" stroke-width="1.200"/><path d="M10.700 10.200l3.600 3.600" stroke="#fff" stroke-width="1.200"/></svg>
<div class="a" style="left:1294.0px;top:734px;font-size:11.8px;line-height:15px;color:#fff;letter-spacing:-0.65px;white-space:pre;">10:46</div>
<div class="a" style="left:1277.6px;top:751px;font-size:11.8px;line-height:15px;color:#fff;letter-spacing:-0.15px;white-space:pre;">20.8.2011 г.</div>
<div class="a" style="left:1346px;top:730px;width:14px;height:38px;border:1px solid #8a8a8a;border-right:none;background:linear-gradient(90deg,#3a3a3a,#1c1c1c)"></div>
<!-- top strip of a window above -->
<div class="a" style="left:0;top:0;width:359px;height:4px;background:linear-gradient(#dcdcdc 0,#fff 1px,#fff 3px,#9a9a9a 4px)"></div>

</body>
</html>
